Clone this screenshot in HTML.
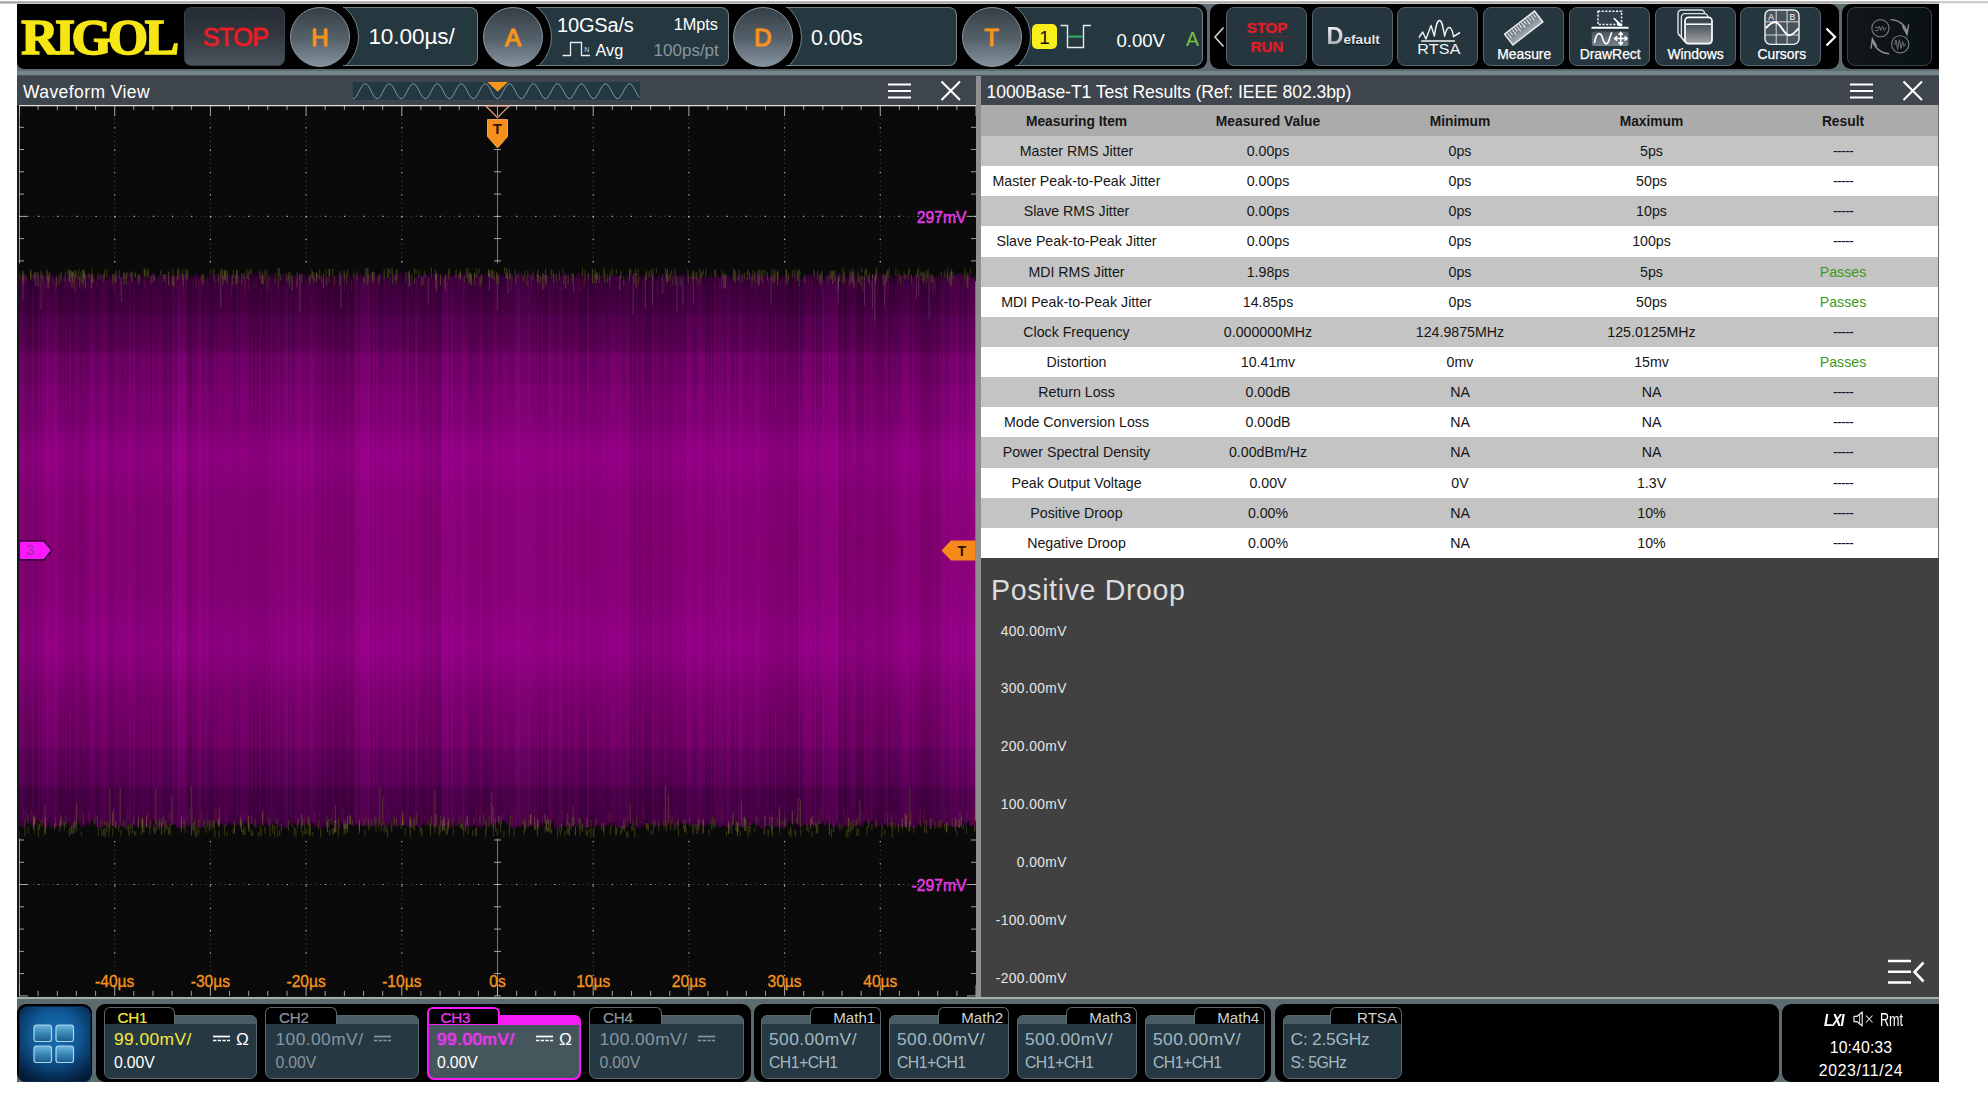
<!DOCTYPE html>
<html lang="en"><head><meta charset="utf-8"><title>RIGOL 1000Base-T1 Test Results</title>
<style>
*{box-sizing:border-box;margin:0;padding:0}
html,body{width:1988px;height:1114px;background:#fff;overflow:hidden}
body{font-family:"Liberation Sans",sans-serif;position:relative}
#topline{position:absolute;left:0;top:1px;width:1988px;height:3px;background:linear-gradient(#c2c2c2,#a8a8a8 55%,#d8d8d8)}
#topline2{position:absolute;left:1939px;top:1px;width:49px;height:3px;background:linear-gradient(#c4c4c4,#d8d8d8 70%,#fff)}
#screen{position:absolute;left:17px;top:4px;width:1921.6px;height:1078px;background:#5b6b6f;overflow:hidden}
.abs{position:absolute}
.t{position:absolute;white-space:nowrap;line-height:1}
#logo{font-family:"Liberation Serif",serif;font-weight:bold;font-size:51.5px;color:#f6e615;letter-spacing:-3.5px;-webkit-text-stroke:1.7px #f6e615;transform-origin:0 0;transform:scaleX(1.0)}
.knob{width:60px;height:60px;border-radius:50%;background:linear-gradient(#353e46,#56626b 55%,#8593a0);border:1px solid #8b97a0;text-align:center}
.knob span{display:block;font-size:24px;line-height:59px;color:#f7941d;-webkit-text-stroke:1px #f7941d;text-shadow:0 0 3px rgba(247,148,29,.4)}
#res{width:958px;border-collapse:collapse;table-layout:fixed;font-size:14.2px;color:#161616}
#res th,#res td{text-align:center;padding:0;height:30.15px;line-height:30px;white-space:nowrap;overflow:hidden}
#res th{background:#ababab;height:30.6px;padding-top:1.4px;line-height:29px;font-weight:bold;font-size:13.8px;color:#161616}
#res tbody tr:nth-child(odd) td{background:#c4c4c4}
#res tbody tr:nth-child(even) td{background:#fff}
#res td.ok{color:#3c9a1c}
#res td.na{letter-spacing:-0.7px}
#res th:nth-child(1),#res td:nth-child(1){width:191px}
#res th:nth-child(2),#res td:nth-child(2){width:192px}
#res th:nth-child(3),#res td:nth-child(3){width:192px}
#res th:nth-child(4),#res td:nth-child(4){width:191px}

</style></head>
<body>
<div id="topline"></div><div id="topline2"></div>
<div id="screen">
<!-- ===== top tool bar ===== -->
<div class="abs" style="left:0;top:0;width:1922px;height:64.8px;overflow:hidden">
<div class="abs " style="left:0px;top:0px;width:1190px;height:64.8px;background:#000;border-radius:0 9px 9px 7px"></div>
<div class="abs " style="left:1193px;top:0px;width:629px;height:64.8px;background:#000;border-radius:9px"></div>
<div class="abs " style="left:1825px;top:0px;width:97px;height:64.8px;background:#000;border-radius:9px 0 0 9px"></div>
<div class="t" id="logo" style="left:4.3px;top:6.9px">RIGOL</div>
<div class="abs " style="left:167px;top:3px;width:101px;height:58.8px;background:linear-gradient(#262c33,#30373f 45%,#4b545c);border-radius:7px;border:1px solid #3a4047"></div>
<div class="t " style="left:218.5px;transform:translateX(-50%);top:21.47px;font-size:25.2px;color:#ee1c25;-webkit-text-stroke:0.5px #ee1c25;letter-spacing:-0.6px;text-shadow:0 0 3px rgba(238,28,37,.45)">STOP</div>
<div class="abs" style="left:326px;top:3px;width:135px;height:59px;background:#25373f;border:1px solid #74828a;border-radius:0 8px 8px 0;border-left:none;overflow:hidden"><div class="abs" style="left:-62px;top:-10.5px;width:78px;height:78px;border-radius:50%;background:#000;border:1px solid #74828a"></div></div>
<div class="abs knob" style="left:273px;top:2.7px"><span>H</span></div>
<div class="abs" style="left:519px;top:3px;width:193px;height:59px;background:#25373f;border:1px solid #74828a;border-radius:0 8px 8px 0;border-left:none;overflow:hidden"><div class="abs" style="left:-62px;top:-10.5px;width:78px;height:78px;border-radius:50%;background:#000;border:1px solid #74828a"></div></div>
<div class="abs knob" style="left:466px;top:2.7px"><span>A</span></div>
<div class="abs" style="left:769px;top:3px;width:171px;height:59px;background:#25373f;border:1px solid #74828a;border-radius:0 8px 8px 0;border-left:none;overflow:hidden"><div class="abs" style="left:-62px;top:-10.5px;width:78px;height:78px;border-radius:50%;background:#000;border:1px solid #74828a"></div></div>
<div class="abs knob" style="left:716px;top:2.7px"><span>D</span></div>
<div class="abs" style="left:997.5px;top:3px;width:188.5px;height:59px;background:#25373f;border:1px solid #74828a;border-radius:0 8px 8px 0;border-left:none;overflow:hidden"><div class="abs" style="left:-62px;top:-10.5px;width:78px;height:78px;border-radius:50%;background:#000;border:1px solid #74828a"></div></div>
<div class="abs knob" style="left:944.5px;top:2.7px"><span>T</span></div>
<div class="t " style="left:351.4px;top:22.47px;font-size:22.6px;color:#fff;letter-spacing:-0.1px">10.00µs/</div>
<div class="t " style="left:540px;top:11.47px;font-size:20px;color:#fff;letter-spacing:-0.17px">10GSa/s</div>
<div class="t " style="right:1221px;top:12px;font-size:16.3px;color:#fff;">1Mpts</div>
<div class="t " style="left:578.5px;top:37.7px;font-size:16.3px;color:#fff;">Avg</div>
<div class="t " style="right:1220.2px;top:38.01px;font-size:17px;color:#8796a0;">100ps/pt</div>
<svg class="abs" style="left:544.5px;top:36.5px" width="30" height="17" viewBox="0 0 30 17"><path d="M0.5 14.5H8.5V1.5H19.5V14.5H28" fill="none" stroke="#e8ecee" stroke-width="1.3"/><text x="22.2" y="10.6" font-family="Liberation Sans, sans-serif" font-size="7" fill="#cfd6da">N</text></svg>
<div class="t " style="left:794px;top:22.95px;font-size:21.2px;color:#fff;">0.00s</div>
<div class="abs " style="left:1015px;top:20px;width:25px;height:25px;background:#f7ee1c;border-radius:5px"></div>
<div class="t " style="left:1027.5px;transform:translateX(-50%);top:23.52px;font-size:19px;color:#111;">1</div>
<svg class="abs" style="left:1042.6px;top:20px" width="32" height="26" viewBox="0 0 32 26"><path d="M0.5 1.5H7.5V23.5H23.5V1.5H31" fill="none" stroke="#e8ecee" stroke-width="1.4"/><path d="M8.5 12.6H22.5" stroke="#2fa56a" stroke-width="2.3"/></svg>
<div class="t " style="left:1099.4px;top:28.16px;font-size:18.6px;color:#fff;">0.00V</div>
<div class="t " style="left:1169px;top:25.79px;font-size:19.5px;color:#7ac143;">A</div>
<svg class="abs" style="left:1195.5px;top:22px" width="12" height="22" viewBox="0 0 12 22"><path d="M10.5 1.5L2 11L10.5 20.5" fill="none" stroke="#cfd4d8" stroke-width="1.6"/></svg>
<svg class="abs" style="left:1808.2px;top:21.6px" width="12" height="22" viewBox="0 0 12 22"><path d="M1.5 2.5L10 11L1.5 19.5" fill="none" stroke="#fff" stroke-width="2.3"/></svg>
<div class="abs " style="left:1209px;top:3.2px;width:81px;height:58.4px;background:#25363f;border:1px solid #566570;border-radius:8px"></div>
<div class="abs " style="left:1294.7px;top:3.2px;width:81px;height:58.4px;background:#25363f;border:1px solid #566570;border-radius:8px"></div>
<div class="abs " style="left:1380.4px;top:3.2px;width:81px;height:58.4px;background:#25363f;border:1px solid #566570;border-radius:8px"></div>
<div class="abs " style="left:1466.1px;top:3.2px;width:81px;height:58.4px;background:#25363f;border:1px solid #566570;border-radius:8px"></div>
<div class="abs " style="left:1551.8px;top:3.2px;width:81px;height:58.4px;background:#25363f;border:1px solid #566570;border-radius:8px"></div>
<div class="abs " style="left:1637.5px;top:3.2px;width:81px;height:58.4px;background:#25363f;border:1px solid #566570;border-radius:8px"></div>
<div class="abs " style="left:1723.2px;top:3.2px;width:81px;height:58.4px;background:#25363f;border:1px solid #566570;border-radius:8px"></div>
<div class="abs " style="left:1829.5px;top:3px;width:85.5px;height:58.6px;background:linear-gradient(90deg,#10161a,#0d1418 70%,#0a1116);border:1px solid #3a444b;border-radius:8px"></div>
<div class="t " style="left:1250px;transform:translateX(-50%);top:15.95px;font-size:15.3px;color:#de1e28;font-weight:bold;letter-spacing:-0.2px;text-shadow:0 0 2px rgba(232,32,42,.5)">STOP</div>
<div class="t " style="left:1250px;transform:translateX(-50%);top:35.05px;font-size:15.3px;color:#de1e28;font-weight:bold;letter-spacing:-0.2px;text-shadow:0 0 2px rgba(232,32,42,.5)">RUN</div>
<div class="abs " style="left:1226px;top:31.8px;width:48px;height:0.8px;background:#5a2a30"></div>
<div class="t" style="left:1309.5px;top:21.3px;color:#e4e7ea;font-weight:bold;font-size:13.6px;text-shadow:0 1px 1px #000"><span style="font-size:23.5px;background:linear-gradient(#fff,#9aa2a8);-webkit-background-clip:text;background-clip:text;color:transparent;text-shadow:none">D</span>efault</div>
<svg class="abs" style="left:1400.5px;top:15.4px" width="43" height="26" viewBox="0 0 46 26" preserveAspectRatio="none"><path d="M1 18.5L5 13L8.5 20L14 6.5L17.5 17C19 8 20 1.5 23 1.5S27 10 28.5 17C30 11 31.5 8.5 33.5 8.5S37 12 38 17.5L41.5 15.5L45 13.5" fill="none" stroke="#f2f4f5" stroke-width="1.5" stroke-linejoin="round"/><path d="M3.5 22H39.5" stroke="#f2f4f5" stroke-width="1.4"/></svg>
<div class="t " style="left:1421.6px;transform:translateX(-50%);top:37.98px;font-size:14.2px;color:#f2f4f5;transform:translateX(-50%) scaleX(1.13);letter-spacing:0.2px">RTSA</div>
<div class="t " style="left:1507.2px;transform:translateX(-50%);top:43.93px;font-size:13.9px;color:#fff;-webkit-text-stroke:0.25px #fff;letter-spacing:0px">Measure</div>
<div class="t " style="left:1593.2px;transform:translateX(-50%);top:43.93px;font-size:13.9px;color:#fff;-webkit-text-stroke:0.25px #fff;letter-spacing:0px">DrawRect</div>
<div class="t " style="left:1678.6px;transform:translateX(-50%);top:43.93px;font-size:13.9px;color:#fff;-webkit-text-stroke:0.25px #fff;letter-spacing:0px">Windows</div>
<div class="t " style="left:1764.8px;transform:translateX(-50%);top:43.93px;font-size:13.9px;color:#fff;-webkit-text-stroke:0.25px #fff;letter-spacing:0px">Cursors</div>
<svg class="abs" style="left:1485px;top:4px" width="46" height="42" viewBox="0 0 46 42"><defs><linearGradient id="rg" x1="0" y1="0" x2="0" y2="1"><stop offset="0" stop-color="#59636b"/><stop offset="1" stop-color="#aab2b8"/></linearGradient></defs><g transform="translate(2.6,26.2) rotate(-37.7)"><rect x="0" y="0" width="37.8" height="13.6" fill="url(#rg)" stroke="#e9edf0" stroke-width="1.5"/><g stroke="#f2f4f6" stroke-width="1"><path d="M3.0 0.8V7.5"/><path d="M5.9 0.8V5.5"/><path d="M8.8 0.8V7.5"/><path d="M11.7 0.8V5.5"/><path d="M14.6 0.8V7.5"/><path d="M17.5 0.8V5.5"/><path d="M20.4 0.8V7.5"/><path d="M23.3 0.8V5.5"/><path d="M26.2 0.8V7.5"/><path d="M29.1 0.8V5.5"/><path d="M32.0 0.8V7.5"/><path d="M34.9 0.8V5.5"/></g></g></svg>
<svg class="abs" style="left:1573.6px;top:5.6px" width="40" height="38" viewBox="0 0 40 38"><defs><linearGradient id="dg" x1="0" y1="0" x2="0" y2="1"><stop offset="0" stop-color="#4a555e"/><stop offset="1" stop-color="#77818a"/></linearGradient></defs><rect x="7" y="1.2" width="23.6" height="13.4" fill="#30404a" stroke="#eef1f3" stroke-width="1.5" stroke-dasharray="2.2 1.4"/><path d="M23.2 8.6L30.4 15.4L27.6 15.2L26.2 11.8Z M25 10.4L30.6 15.8" fill="#fff" stroke="#fff" stroke-width="1.5" stroke-linejoin="round"/><path d="M0.5 17.8H37.5" stroke="#fff" stroke-width="2"/><rect x="0.8" y="21.4" width="36.8" height="14.6" rx="2.5" fill="url(#dg)"/><path d="M3.5 32.5C5.5 21.5 9.5 21.5 11.5 28S16.5 36.5 18.5 28.5L20.5 23" fill="none" stroke="#fff" stroke-width="1.7" stroke-linecap="round"/><path d="M29.8 22.6V34.4M23.8 28.5H35.8M27.6 24.8L29.8 22.4L32 24.8M27.6 32.2L29.8 34.6L32 32.2M26 26.3L23.6 28.5L26 30.7M33.6 26.3L36 28.5L33.6 30.7" fill="none" stroke="#fff" stroke-width="1.5"/></svg>
<svg class="abs" style="left:1660.2px;top:5.4px" width="38" height="38" viewBox="0 0 38 38"><defs><linearGradient id="wg2" x1="0" y1="0" x2="0" y2="1"><stop offset="0" stop-color="#2f3a43"/><stop offset="0.3" stop-color="#4a545c"/><stop offset="1" stop-color="#a3a5a6"/></linearGradient></defs><rect x="1" y="1" width="26.5" height="26" rx="3.5" fill="#27363f" stroke="#dfe4e8" stroke-width="1.4"/><rect x="4.4" y="4.6" width="26.5" height="26" rx="3.5" fill="#27363f" stroke="#dfe4e8" stroke-width="1.4"/><path d="M1.6 25L8 33" stroke="#dfe4e8" stroke-width="1.3"/><rect x="8" y="8.4" width="27" height="26.2" rx="3.5" fill="url(#wg2)" stroke="#fff" stroke-width="1.7"/><path d="M8.4 15.2H34.8" stroke="#fff" stroke-width="1.5"/></svg>
<svg class="abs" style="left:1746.6px;top:5.3px" width="37" height="37" viewBox="0 0 37 37"><rect x="1" y="1" width="34" height="34.4" rx="5.5" fill="#48535d" stroke="#eef1f3" stroke-width="1.4"/><path d="M12.2 1.5V35M23.1 1.5V35M1.5 12.8H34.5M1.5 26H34.5" stroke="#e6eaed" stroke-width="1" opacity="0.9"/><path d="M2 19C5.5 15 9 12.6 12.2 13.4C17 15 20 25.5 25 26.2C28.5 26.3 31.5 23 34.3 19.5" fill="none" stroke="#fff" stroke-width="2"/><text x="4.2" y="10.6" font-family="Liberation Sans, sans-serif" font-size="8.6" fill="#fff">A</text><text x="25.6" y="10.6" font-family="Liberation Sans, sans-serif" font-size="8.6" fill="#fff">B</text></svg>
<svg class="abs" style="left:1853px;top:14px" width="44" height="40" viewBox="0 0 44 40" fill="none" stroke="#777b80" stroke-width="1.1"><circle cx="10.4" cy="10.2" r="8.6"/><circle cx="30.2" cy="26.3" r="8.6"/><path d="M20.4 1.6C29 1.8 35.5 7 37.2 15M32.4 8L37 16.6L38.6 6.4" stroke-width="1.4" stroke="#8d9196"/><path d="M19.2 35.8C10.5 35 4 29.5 2.2 21.5M6.8 28.5L2.4 20.6L1 30.6" stroke-width="1.4" stroke="#8d9196"/><path d="M4.6 12.6H8L9.4 8.2L11 12.4L12.6 8.4L14.4 12.4L16 9.4M5 9.4H8" stroke-width="0.9"/><path d="M24.6 27L26 22L27.6 31.4L29.4 21.6L31 30.4L32.6 23.4L34 28.4L35.4 25.6" stroke-width="0.9"/></svg>
</div>
<div class="abs " style="left:0px;top:67px;width:1922px;height:4px;background:#76858a"></div>
<div class="abs " style="left:0px;top:71px;width:1922px;height:1.3px;background:#4b5459"></div>
<!-- ===== waveform view ===== -->
<div class="abs " style="left:0px;top:72.3px;width:959px;height:29.1px;background:#3f454c"></div>
<div class="abs " style="left:959px;top:72.3px;width:5px;height:923.7px;background:#8f9092"></div>
<div class="t " style="left:6px;top:79.99px;font-size:17.5px;color:#fff;letter-spacing:0.42px">Waveform View</div>
<svg class="abs" style="left:336px;top:78px" width="287" height="18" viewBox="0 0 287 18"><rect width="287" height="18" fill="#243842"/><polyline points="0.0,16.7 1.5,16.3 3.0,14.8 4.5,12.4 6.0,9.6 7.5,6.7 9.0,4.2 10.5,2.4 12.0,1.7 13.5,2.1 15.0,3.6 16.5,6.0 18.0,8.8 19.5,11.7 21.0,14.2 22.5,16.0 24.0,16.7 25.5,16.3 27.0,14.8 28.5,12.5 30.0,9.6 31.5,6.7 33.0,4.2 34.5,2.5 36.0,1.7 37.5,2.1 39.0,3.6 40.5,5.9 42.0,8.7 43.5,11.6 45.0,14.2 46.5,15.9 48.0,16.7 49.5,16.3 51.0,14.8 52.5,12.5 54.0,9.7 55.5,6.8 57.0,4.3 58.5,2.5 60.0,1.7 61.5,2.1 63.0,3.5 64.5,5.9 66.0,8.7 67.5,11.6 69.0,14.1 70.5,15.9 72.0,16.7 73.5,16.3 75.0,14.9 76.5,12.6 78.0,9.8 79.5,6.9 81.0,4.3 82.5,2.5 84.0,1.7 85.5,2.1 87.0,3.5 88.5,5.8 90.0,8.6 91.5,11.5 93.0,14.1 94.5,15.9 96.0,16.7 97.5,16.3 99.0,14.9 100.5,12.6 102.0,9.8 103.5,6.9 105.0,4.4 106.5,2.5 108.0,1.7 109.5,2.1 111.0,3.5 112.5,5.8 114.0,8.6 115.5,11.5 117.0,14.0 118.5,15.9 120.0,16.7 121.5,16.4 123.0,15.0 124.5,12.7 126.0,9.9 127.5,7.0 129.0,4.4 130.5,2.6 132.0,1.7 133.5,2.0 135.0,3.4 136.5,5.7 138.0,8.5 139.5,11.4 141.0,14.0 142.5,15.8 144.0,16.7 145.5,16.4 147.0,15.0 148.5,12.7 150.0,9.9 151.5,7.0 153.0,4.4 154.5,2.6 156.0,1.7 157.5,2.0 159.0,3.4 160.5,5.6 162.0,8.4 163.5,11.4 165.0,13.9 166.5,15.8 168.0,16.7 169.5,16.4 171.0,15.0 172.5,12.8 174.0,10.0 175.5,7.1 177.0,4.5 178.5,2.6 180.0,1.7 181.5,2.0 183.0,3.4 184.5,5.6 186.0,8.4 187.5,11.3 189.0,13.9 190.5,15.8 192.0,16.7 193.5,16.4 195.0,15.1 196.5,12.8 198.0,10.0 199.5,7.1 201.0,4.5 202.5,2.6 204.0,1.7 205.5,2.0 207.0,3.3 208.5,5.5 210.0,8.3 211.5,11.2 213.0,13.8 214.5,15.7 216.0,16.6 217.5,16.4 219.0,15.1 220.5,12.9 222.0,10.1 223.5,7.2 225.0,4.6 226.5,2.7 228.0,1.8 229.5,2.0 231.0,3.3 232.5,5.5 234.0,8.3 235.5,11.2 237.0,13.8 238.5,15.7 240.0,16.6 241.5,16.4 243.0,15.1 244.5,12.9 246.0,10.2 247.5,7.2 249.0,4.6 250.5,2.7 252.0,1.8 253.5,2.0 255.0,3.2 256.5,5.4 258.0,8.2 259.5,11.1 261.0,13.7 262.5,15.7 264.0,16.6 265.5,16.5 267.0,15.2 268.5,13.0 270.0,10.2 271.5,7.3 273.0,4.7 274.5,2.7 276.0,1.8 277.5,1.9 279.0,3.2 280.5,5.4 282.0,8.1 283.5,11.1 285.0,13.7 286.5,15.7" fill="none" stroke="#86a5ad" stroke-width="0.9"/><path d="M134.4 0H155L144.7 9.8Z" fill="#f7941d"/></svg>
<svg class="abs" style="left:871px;top:79.2px" width="24" height="16" viewBox="0 0 24 16"><path d="M0 1.5H23M0 8H23M0 14.5H23" stroke="#fff" stroke-width="2.2"/></svg>
<svg class="abs" style="left:922.5px;top:76.3px" width="22" height="22" viewBox="0 0 22 22"><path d="M1.5 1.5L20 20M20 1.5L1.5 20" stroke="#fff" stroke-width="2.1"/></svg>
<svg class="abs" style="left:1px;top:101.4px" width="958" height="891.9" viewBox="0 0 958 891.9">
<defs><linearGradient id="wg" x1="0" y1="0" x2="0" y2="1"><stop offset="0.000" stop-color="#2c0030"/><stop offset="0.029" stop-color="#3e003e"/><stop offset="0.050" stop-color="#440041"/><stop offset="0.073" stop-color="#4a0046"/><stop offset="0.082" stop-color="#530050"/><stop offset="0.118" stop-color="#5b0055"/><stop offset="0.140" stop-color="#62005a"/><stop offset="0.150" stop-color="#74006a"/><stop offset="0.199" stop-color="#78006e"/><stop offset="0.208" stop-color="#800074"/><stop offset="0.270" stop-color="#840078"/><stop offset="0.299" stop-color="#900082"/><stop offset="0.327" stop-color="#960087"/><stop offset="0.365" stop-color="#930084"/><stop offset="0.399" stop-color="#8c007c"/><stop offset="0.497" stop-color="#8a0078"/><stop offset="0.587" stop-color="#8c007c"/><stop offset="0.631" stop-color="#920084"/><stop offset="0.676" stop-color="#950087"/><stop offset="0.708" stop-color="#8e0080"/><stop offset="0.748" stop-color="#820075"/><stop offset="0.801" stop-color="#7a006e"/><stop offset="0.848" stop-color="#76006a"/><stop offset="0.859" stop-color="#680062"/><stop offset="0.916" stop-color="#5e005a"/><stop offset="0.927" stop-color="#4e004c"/><stop offset="0.977" stop-color="#480048"/><stop offset="1.000" stop-color="#400040"/></linearGradient></defs>
<rect width="958" height="891.9" fill="#0a0a0a"/>
<path d="M96.7 0V890.9M192.4 0V890.9M288.1 0V890.9M383.8 0V890.9M575.2 0V890.9M670.9 0V890.9M766.6 0V890.9M862.3 0V890.9" stroke="#8c8c8c" stroke-width="1" stroke-dasharray="1 3.46" opacity="0.55" fill="none"/>
<path d="M96.7 0V890.9M192.4 0V890.9M288.1 0V890.9M383.8 0V890.9M575.2 0V890.9M670.9 0V890.9M766.6 0V890.9M862.3 0V890.9" stroke="#fff" stroke-width="1.2" stroke-dasharray="1.3 21" opacity="0.6" fill="none"/>
<path d="M1 111.4H958M1 222.7H958M1 334.1H958M1 556.8H958M1 668.2H958M1 779.5H958" stroke="#8c8c8c" stroke-width="1" stroke-dasharray="1 3.78" opacity="0.55" fill="none"/>
<path d="M1 111.4H958M1 222.7H958M1 334.1H958M1 556.8H958M1 668.2H958M1 779.5H958" stroke="#fff" stroke-width="1.2" stroke-dasharray="1.3 17.82" opacity="0.6" fill="none"/>
<path d="M1.0 0v11M1.0 890.9v-11M20.1 0v5M20.1 890.9v-5M39.3 0v5M39.3 890.9v-5M58.4 0v5M58.4 890.9v-5M77.6 0v5M77.6 890.9v-5M96.7 0v11M96.7 890.9v-11M115.8 0v5M115.8 890.9v-5M135.0 0v5M135.0 890.9v-5M154.1 0v5M154.1 890.9v-5M173.3 0v5M173.3 890.9v-5M192.4 0v11M192.4 890.9v-11M211.5 0v5M211.5 890.9v-5M230.7 0v5M230.7 890.9v-5M249.8 0v5M249.8 890.9v-5M269.0 0v5M269.0 890.9v-5M288.1 0v11M288.1 890.9v-11M307.2 0v5M307.2 890.9v-5M326.4 0v5M326.4 890.9v-5M345.5 0v5M345.5 890.9v-5M364.7 0v5M364.7 890.9v-5M383.8 0v11M383.8 890.9v-11M402.9 0v5M402.9 890.9v-5M422.1 0v5M422.1 890.9v-5M441.2 0v5M441.2 890.9v-5M460.4 0v5M460.4 890.9v-5M479.5 0v11M479.5 890.9v-11M498.6 0v5M498.6 890.9v-5M517.8 0v5M517.8 890.9v-5M536.9 0v5M536.9 890.9v-5M556.1 0v5M556.1 890.9v-5M575.2 0v11M575.2 890.9v-11M594.3 0v5M594.3 890.9v-5M613.5 0v5M613.5 890.9v-5M632.6 0v5M632.6 890.9v-5M651.8 0v5M651.8 890.9v-5M670.9 0v11M670.9 890.9v-11M690.0 0v5M690.0 890.9v-5M709.2 0v5M709.2 890.9v-5M728.3 0v5M728.3 890.9v-5M747.5 0v5M747.5 890.9v-5M766.6 0v11M766.6 890.9v-11M785.7 0v5M785.7 890.9v-5M804.9 0v5M804.9 890.9v-5M824.0 0v5M824.0 890.9v-5M843.2 0v5M843.2 890.9v-5M862.3 0v11M862.3 890.9v-11M881.4 0v5M881.4 890.9v-5M900.6 0v5M900.6 890.9v-5M919.7 0v5M919.7 890.9v-5M938.9 0v5M938.9 890.9v-5M958.0 0v11M958.0 890.9v-11M1 0.0h9M958 0.0h-9M476.0 0.0h7M1 22.3h5M958 22.3h-5M476.0 22.3h7M1 44.5h5M958 44.5h-5M476.0 44.5h7M1 66.8h5M958 66.8h-5M476.0 66.8h7M1 89.1h5M958 89.1h-5M476.0 89.1h7M1 111.4h9M958 111.4h-9M476.0 111.4h7M1 133.6h5M958 133.6h-5M476.0 133.6h7M1 155.9h5M958 155.9h-5M476.0 155.9h7M1 178.2h5M958 178.2h-5M476.0 178.2h7M1 200.5h5M958 200.5h-5M476.0 200.5h7M1 222.7h9M958 222.7h-9M476.0 222.7h7M1 245.0h5M958 245.0h-5M476.0 245.0h7M1 267.3h5M958 267.3h-5M476.0 267.3h7M1 289.5h5M958 289.5h-5M476.0 289.5h7M1 311.8h5M958 311.8h-5M476.0 311.8h7M1 334.1h9M958 334.1h-9M476.0 334.1h7M1 356.4h5M958 356.4h-5M476.0 356.4h7M1 378.6h5M958 378.6h-5M476.0 378.6h7M1 400.9h5M958 400.9h-5M476.0 400.9h7M1 423.2h5M958 423.2h-5M476.0 423.2h7M1 445.4h9M958 445.4h-9M476.0 445.4h7M1 467.7h5M958 467.7h-5M476.0 467.7h7M1 490.0h5M958 490.0h-5M476.0 490.0h7M1 512.3h5M958 512.3h-5M476.0 512.3h7M1 534.5h5M958 534.5h-5M476.0 534.5h7M1 556.8h9M958 556.8h-9M476.0 556.8h7M1 579.1h5M958 579.1h-5M476.0 579.1h7M1 601.4h5M958 601.4h-5M476.0 601.4h7M1 623.6h5M958 623.6h-5M476.0 623.6h7M1 645.9h5M958 645.9h-5M476.0 645.9h7M1 668.2h9M958 668.2h-9M476.0 668.2h7M1 690.4h5M958 690.4h-5M476.0 690.4h7M1 712.7h5M958 712.7h-5M476.0 712.7h7M1 735.0h5M958 735.0h-5M476.0 735.0h7M1 757.3h5M958 757.3h-5M476.0 757.3h7M1 779.5h9M958 779.5h-9M476.0 779.5h7M1 801.8h5M958 801.8h-5M476.0 801.8h7M1 824.1h5M958 824.1h-5M476.0 824.1h7M1 846.4h5M958 846.4h-5M476.0 846.4h7M1 868.6h5M958 868.6h-5M476.0 868.6h7M1 890.9h9M958 890.9h-9M476.0 890.9h7" stroke="#dcdcdc" stroke-width="1" fill="none" opacity="0.72"/>
<path d="M1 890.9V0.5H958" stroke="#e0e0e0" stroke-width="1.3" fill="none"/>
<path d="M479.5 44V172.6" stroke="#cfcfcf" stroke-width="1" opacity="0.55" fill="none"/>
<path d="M479.5 719.6V890.9" stroke="#cfcfcf" stroke-width="1" opacity="0.55" fill="none"/>
<rect x="1" y="166.6" width="957" height="559" fill="url(#wg)"/>
<linearGradient id="sg1" gradientUnits="userSpaceOnUse" x1="0" y1="166.6" x2="0" y2="725.6"><stop offset="0" stop-color="#000" stop-opacity="1"/><stop offset="0.18" stop-color="#000" stop-opacity="0.8"/><stop offset="0.3" stop-color="#000" stop-opacity="0.4"/><stop offset="0.5" stop-color="#000" stop-opacity="0.33"/><stop offset="0.72" stop-color="#000" stop-opacity="0.4"/><stop offset="0.85" stop-color="#000" stop-opacity="0.8"/><stop offset="1" stop-color="#000" stop-opacity="1"/></linearGradient>
<g stroke="url(#sg1)" opacity="0.15" fill="none"><path d="M8.5 166.6v559M11.5 166.6v559M18.5 166.6v559M22.5 166.6v559M35.5 166.6v559M40.5 166.6v559M60.5 166.6v559M91.5 166.6v559M92.5 166.6v559M93.5 166.6v559M94.5 166.6v559M95.5 166.6v559M113.5 166.6v559M127.5 166.6v559M145.5 166.6v559M158.5 166.6v559M176.5 166.6v559M186.5 166.6v559M190.5 166.6v559M205.5 166.6v559M216.5 166.6v559M217.5 166.6v559M247.5 166.6v559M260.5 166.6v559M262.5 166.6v559M263.5 166.6v559M264.5 166.6v559M270.5 166.6v559M272.5 166.6v559M274.5 166.6v559M275.5 166.6v559M284.5 166.6v559M285.5 166.6v559M288.5 166.6v559M290.5 166.6v559M303.5 166.6v559M305.5 166.6v559M309.5 166.6v559M310.5 166.6v559M318.5 166.6v559M319.5 166.6v559M323.5 166.6v559M324.5 166.6v559M325.5 166.6v559M328.5 166.6v559M335.5 166.6v559M340.5 166.6v559M341.5 166.6v559M357.5 166.6v559M364.5 166.6v559M367.5 166.6v559M386.5 166.6v559M387.5 166.6v559M396.5 166.6v559M411.5 166.6v559M419.5 166.6v559M435.5 166.6v559M438.5 166.6v559M443.5 166.6v559M453.5 166.6v559M469.5 166.6v559M475.5 166.6v559M490.5 166.6v559M495.5 166.6v559M496.5 166.6v559M502.5 166.6v559M506.5 166.6v559M512.5 166.6v559M525.5 166.6v559M527.5 166.6v559M528.5 166.6v559M529.5 166.6v559M536.5 166.6v559M538.5 166.6v559M554.5 166.6v559M555.5 166.6v559M579.5 166.6v559M585.5 166.6v559M588.5 166.6v559M589.5 166.6v559M590.5 166.6v559M599.5 166.6v559M616.5 166.6v559M617.5 166.6v559M628.5 166.6v559M629.5 166.6v559M630.5 166.6v559M637.5 166.6v559M644.5 166.6v559M645.5 166.6v559M651.5 166.6v559M656.5 166.6v559M657.5 166.6v559M663.5 166.6v559M692.5 166.6v559M698.5 166.6v559M699.5 166.6v559M715.5 166.6v559M716.5 166.6v559M745.5 166.6v559M751.5 166.6v559M752.5 166.6v559M755.5 166.6v559M758.5 166.6v559M760.5 166.6v559M765.5 166.6v559M768.5 166.6v559M778.5 166.6v559M784.5 166.6v559M791.5 166.6v559M806.5 166.6v559M813.5 166.6v559M815.5 166.6v559M820.5 166.6v559M841.5 166.6v559M843.5 166.6v559M844.5 166.6v559M845.5 166.6v559M864.5 166.6v559M865.5 166.6v559M871.5 166.6v559M872.5 166.6v559M891.5 166.6v559M892.5 166.6v559M895.5 166.6v559M897.5 166.6v559M903.5 166.6v559M904.5 166.6v559M907.5 166.6v559M912.5 166.6v559M924.5 166.6v559M927.5 166.6v559M947.5 166.6v559" stroke-width="1"/><path d="M13 166.6v559M17 166.6v559M42 166.6v559M44 166.6v559M68 166.6v559M104 166.6v559M106 166.6v559M119 166.6v559M133 166.6v559M157 166.6v559M171 166.6v559M185 166.6v559M194 166.6v559M236 166.6v559M240 166.6v559M317 166.6v559M321 166.6v559M362 166.6v559M385 166.6v559M392 166.6v559M406 166.6v559M422 166.6v559M442 166.6v559M457 166.6v559M468 166.6v559M515 166.6v559M518 166.6v559M523 166.6v559M546 166.6v559M562 166.6v559M575 166.6v559M577 166.6v559M613 166.6v559M633 166.6v559M643 166.6v559M653 166.6v559M662 166.6v559M688 166.6v559M695 166.6v559M708 166.6v559M719 166.6v559M780 166.6v559M783 166.6v559M795 166.6v559M876 166.6v559M899 166.6v559M902 166.6v559M942 166.6v559" stroke-width="2"/><path d="M54.5 166.6v559M78.5 166.6v559M109.5 166.6v559M245.5 166.6v559M312.5 166.6v559M333.5 166.6v559M353.5 166.6v559M465.5 166.6v559M482.5 166.6v559M493.5 166.6v559M548.5 166.6v559M564.5 166.6v559M567.5 166.6v559M572.5 166.6v559M621.5 166.6v559M666.5 166.6v559M730.5 166.6v559M771.5 166.6v559M774.5 166.6v559M822.5 166.6v559M827.5 166.6v559M839.5 166.6v559M859.5 166.6v559M862.5 166.6v559M929.5 166.6v559" stroke-width="3"/></g>
<linearGradient id="sg2" gradientUnits="userSpaceOnUse" x1="0" y1="166.6" x2="0" y2="725.6"><stop offset="0" stop-color="#2a0030" stop-opacity="1"/><stop offset="0.18" stop-color="#2a0030" stop-opacity="0.8"/><stop offset="0.3" stop-color="#2a0030" stop-opacity="0.4"/><stop offset="0.5" stop-color="#2a0030" stop-opacity="0.33"/><stop offset="0.72" stop-color="#2a0030" stop-opacity="0.4"/><stop offset="0.85" stop-color="#2a0030" stop-opacity="0.8"/><stop offset="1" stop-color="#2a0030" stop-opacity="1"/></linearGradient>
<g stroke="url(#sg2)" opacity="0.2" fill="none"><path d="M6.5 166.6v559M19.5 166.6v559M23.5 166.6v559M100.5 166.6v559M129.5 166.6v559M138.5 166.6v559M150.5 166.6v559M159.5 166.6v559M163.5 166.6v559M168.5 166.6v559M169.5 166.6v559M188.5 166.6v559M191.5 166.6v559M220.5 166.6v559M231.5 166.6v559M243.5 166.6v559M252.5 166.6v559M254.5 166.6v559M258.5 166.6v559M266.5 166.6v559M271.5 166.6v559M276.5 166.6v559M287.5 166.6v559M299.5 166.6v559M300.5 166.6v559M304.5 166.6v559M326.5 166.6v559M327.5 166.6v559M348.5 166.6v559M365.5 166.6v559M373.5 166.6v559M377.5 166.6v559M379.5 166.6v559M402.5 166.6v559M412.5 166.6v559M413.5 166.6v559M416.5 166.6v559M420.5 166.6v559M439.5 166.6v559M440.5 166.6v559M454.5 166.6v559M455.5 166.6v559M461.5 166.6v559M470.5 166.6v559M504.5 166.6v559M509.5 166.6v559M526.5 166.6v559M537.5 166.6v559M559.5 166.6v559M578.5 166.6v559M610.5 166.6v559M623.5 166.6v559M626.5 166.6v559M627.5 166.6v559M631.5 166.6v559M649.5 166.6v559M675.5 166.6v559M676.5 166.6v559M689.5 166.6v559M701.5 166.6v559M702.5 166.6v559M713.5 166.6v559M714.5 166.6v559M777.5 166.6v559M800.5 166.6v559M802.5 166.6v559M803.5 166.6v559M830.5 166.6v559M842.5 166.6v559M850.5 166.6v559M855.5 166.6v559M870.5 166.6v559M879.5 166.6v559M893.5 166.6v559M906.5 166.6v559M908.5 166.6v559M911.5 166.6v559M919.5 166.6v559M920.5 166.6v559M935.5 166.6v559M945.5 166.6v559M946.5 166.6v559M948.5 166.6v559M951.5 166.6v559" stroke-width="1"/><path d="M10 166.6v559M50 166.6v559M76 166.6v559M102 166.6v559M122 166.6v559M153 166.6v559M173 166.6v559M233 166.6v559M251 166.6v559M401 166.6v559M404 166.6v559M432 166.6v559M437 166.6v559M460 166.6v559M521 166.6v559M553 166.6v559M582 166.6v559M655 166.6v559M660 166.6v559M678 166.6v559M691 166.6v559M726 166.6v559M728 166.6v559M747 166.6v559M799 166.6v559M809 166.6v559M878 166.6v559M910 166.6v559" stroke-width="2"/><path d="M32.5 166.6v559M46.5 166.6v559M63.5 166.6v559M70.5 166.6v559M81.5 166.6v559M147.5 166.6v559M256.5 166.6v559M371.5 166.6v559M394.5 166.6v559M451.5 166.6v559M472.5 166.6v559M605.5 166.6v559M705.5 166.6v559M734.5 166.6v559M743.5 166.6v559M762.5 166.6v559M881.5 166.6v559" stroke-width="3"/></g>
<linearGradient id="sg3" gradientUnits="userSpaceOnUse" x1="0" y1="166.6" x2="0" y2="725.6"><stop offset="0" stop-color="#c010b8" stop-opacity="0.35"/><stop offset="0.18" stop-color="#c010b8" stop-opacity="0.45"/><stop offset="0.3" stop-color="#c010b8" stop-opacity="0.4"/><stop offset="0.5" stop-color="#c010b8" stop-opacity="0.33"/><stop offset="0.72" stop-color="#c010b8" stop-opacity="0.4"/><stop offset="0.85" stop-color="#c010b8" stop-opacity="0.45"/><stop offset="1" stop-color="#c010b8" stop-opacity="0.35"/></linearGradient>
<g stroke="url(#sg3)" opacity="0.12" fill="none"><path d="M15.5 166.6v559M20.5 166.6v559M21.5 166.6v559M24.5 166.6v559M25.5 166.6v559M36.5 166.6v559M39.5 166.6v559M61.5 166.6v559M72.5 166.6v559M114.5 166.6v559M130.5 166.6v559M137.5 166.6v559M139.5 166.6v559M180.5 166.6v559M187.5 166.6v559M202.5 166.6v559M204.5 166.6v559M209.5 166.6v559M218.5 166.6v559M259.5 166.6v559M273.5 166.6v559M281.5 166.6v559M282.5 166.6v559M286.5 166.6v559M291.5 166.6v559M293.5 166.6v559M308.5 166.6v559M322.5 166.6v559M329.5 166.6v559M346.5 166.6v559M347.5 166.6v559M350.5 166.6v559M366.5 166.6v559M368.5 166.6v559M389.5 166.6v559M418.5 166.6v559M433.5 166.6v559M434.5 166.6v559M497.5 166.6v559M499.5 166.6v559M503.5 166.6v559M510.5 166.6v559M513.5 166.6v559M533.5 166.6v559M558.5 166.6v559M601.5 166.6v559M607.5 166.6v559M611.5 166.6v559M634.5 166.6v559M635.5 166.6v559M636.5 166.6v559M669.5 166.6v559M670.5 166.6v559M693.5 166.6v559M709.5 166.6v559M710.5 166.6v559M712.5 166.6v559M723.5 166.6v559M724.5 166.6v559M732.5 166.6v559M776.5 166.6v559M785.5 166.6v559M801.5 166.6v559M807.5 166.6v559M812.5 166.6v559M814.5 166.6v559M832.5 166.6v559M846.5 166.6v559M849.5 166.6v559M867.5 166.6v559M886.5 166.6v559M890.5 166.6v559M921.5 166.6v559M923.5 166.6v559M925.5 166.6v559M934.5 166.6v559M937.5 166.6v559M939.5 166.6v559M940.5 166.6v559M950.5 166.6v559" stroke-width="1"/><path d="M4 166.6v559M52 166.6v559M97 166.6v559M112 166.6v559M116 166.6v559M141 166.6v559M295 166.6v559M619 166.6v559M648 166.6v559M681 166.6v559M757 166.6v559M767 166.6v559M797 166.6v559M817 166.6v559M819 166.6v559M834 166.6v559M889 166.6v559M953 166.6v559" stroke-width="2"/><path d="M29.5 166.6v559M125.5 166.6v559M161.5 166.6v559M182.5 166.6v559M207.5 166.6v559M223.5 166.6v559M226.5 166.6v559M359.5 166.6v559M445.5 166.6v559M531.5 166.6v559M721.5 166.6v559M749.5 166.6v559M789.5 166.6v559M836.5 166.6v559" stroke-width="3"/></g>
<linearGradient id="sg4" gradientUnits="userSpaceOnUse" x1="0" y1="166.6" x2="0" y2="725.6"><stop offset="0" stop-color="#b0107a" stop-opacity="0.35"/><stop offset="0.18" stop-color="#b0107a" stop-opacity="0.45"/><stop offset="0.3" stop-color="#b0107a" stop-opacity="0.4"/><stop offset="0.5" stop-color="#b0107a" stop-opacity="0.33"/><stop offset="0.72" stop-color="#b0107a" stop-opacity="0.4"/><stop offset="0.85" stop-color="#b0107a" stop-opacity="0.45"/><stop offset="1" stop-color="#b0107a" stop-opacity="0.35"/></linearGradient>
<g stroke="url(#sg4)" opacity="0.17" fill="none"><path d="M74.5 166.6v559M86.5 166.6v559M128.5 166.6v559M134.5 166.6v559M136.5 166.6v559M151.5 166.6v559M174.5 166.6v559M219.5 166.6v559M221.5 166.6v559M228.5 166.6v559M234.5 166.6v559M242.5 166.6v559M253.5 166.6v559M298.5 166.6v559M349.5 166.6v559M351.5 166.6v559M356.5 166.6v559M369.5 166.6v559M410.5 166.6v559M429.5 166.6v559M516.5 166.6v559M519.5 166.6v559M524.5 166.6v559M624.5 166.6v559M717.5 166.6v559M764.5 166.6v559M781.5 166.6v559M825.5 166.6v559M866.5 166.6v559M894.5 166.6v559M896.5 166.6v559M922.5 166.6v559" stroke-width="1"/><path d="M38 166.6v559M88 166.6v559M144 166.6v559M211 166.6v559M337 166.6v559M415 166.6v559M463 166.6v559M477 166.6v559M501 166.6v559M543 166.6v559M570 166.6v559M609 166.6v559M672 166.6v559M683 166.6v559M697 166.6v559M793 166.6v559M805 166.6v559M857 166.6v559M869 166.6v559" stroke-width="2"/><path d="M58.5 166.6v559M268.5 166.6v559M398.5 166.6v559M853.5 166.6v559M955.5 166.6v559" stroke-width="3"/></g>
<g fill="#000" opacity="0.06"><rect x="1.0" y="166.6" width="26.8" height="559"/><rect x="46.1" y="166.6" width="22.2" height="559"/><rect x="87.2" y="166.6" width="12.7" height="559"/><rect x="114.3" y="166.6" width="29.6" height="559"/><rect x="143.9" y="166.6" width="10.4" height="559"/><rect x="169.5" y="166.6" width="10.5" height="559"/><rect x="191.3" y="166.6" width="26.4" height="559"/><rect x="217.7" y="166.6" width="32.9" height="559"/><rect x="295.6" y="166.6" width="18.2" height="559"/><rect x="313.8" y="166.6" width="23.9" height="559"/><rect x="404.6" y="166.6" width="19.0" height="559"/><rect x="611.9" y="166.6" width="18.7" height="559"/><rect x="630.6" y="166.6" width="23.6" height="559"/><rect x="747.1" y="166.6" width="32.0" height="559"/><rect x="820.4" y="166.6" width="33.3" height="559"/><rect x="853.6" y="166.6" width="21.2" height="559"/><rect x="902.7" y="166.6" width="20.5" height="559"/></g><g fill="#d020c8" opacity="0.05"><rect x="154.3" y="166.6" width="15.1" height="559"/><rect x="337.7" y="166.6" width="11.8" height="559"/><rect x="349.4" y="166.6" width="7.0" height="559"/><rect x="423.5" y="166.6" width="22.9" height="559"/><rect x="491.2" y="166.6" width="27.0" height="559"/><rect x="697.9" y="166.6" width="13.0" height="559"/><rect x="803.5" y="166.6" width="16.9" height="559"/><rect x="923.3" y="166.6" width="22.1" height="559"/><rect x="945.4" y="166.6" width="12.6" height="559"/></g>
<path d="M0 158.6L1 175.1L3 172.1L5 170.1L7.5 169.1L9 170.1L10 173.1L12 175.1L13 169.1L15 170.1L17.5 167.1L18.5 168.1L21 170.1L23 173.1L25 168.1L26.5 169.1L29 172.1L30.5 170.1L33 169.1L34.5 168.1L35.5 175.1L37 171.1L38.5 168.1L40.5 175.1L43 171.1L45 172.1L46.5 171.1L48.5 169.1L50.5 170.1L52.5 170.1L54 171.1L55 169.1L57 169.1L59 170.1L61.5 171.1L64 173.1L65 175.1L67 168.1L69 170.1L70 168.1L72 168.1L74 175.1L75 175.1L76 169.1L77 175.1L79 169.1L80 173.1L81.5 169.1L83 171.1L85 168.1L86.5 170.1L88 173.1L89 175.1L91 169.1L93.5 169.1L94.5 171.1L95.5 172.1L96.5 169.1L99 169.1L100.5 171.1L103 172.1L104 171.1L106.5 168.1L109 169.1L111.5 168.1L112.5 168.1L114.5 171.1L117 175.1L119 171.1L121 170.1L123.5 175.1L124.5 168.1L126.5 175.1L127.5 167.1L128.5 175.1L130.5 168.1L133 171.1L134.5 167.1L136 170.1L137.5 170.1L138.5 175.1L140.5 170.1L143 172.1L144.5 169.1L147 170.1L149.5 169.1L150.5 169.1L152.5 170.1L155 170.1L157 172.1L159 172.1L161 169.1L163.5 168.1L165.5 169.1L167.5 169.1L169 173.1L170 167.1L172.5 172.1L175 172.1L176 170.1L178 168.1L179 167.1L180.5 171.1L181.5 172.1L184 173.1L185.5 175.1L186.5 169.1L187.5 175.1L190 175.1L191.5 168.1L193 167.1L195.5 168.1L196.5 170.1L198 169.1L200 169.1L201.5 170.1L202.5 170.1L203.5 170.1L204.5 171.1L205.5 168.1L208 173.1L210.5 171.1L211.5 167.1L214 173.1L215.5 171.1L218 172.1L219 168.1L221.5 169.1L223 175.1L224 170.1L225 167.1L226 168.1L227.5 168.1L229 171.1L230 169.1L231.5 171.1L233 167.1L235 168.1L236 169.1L238.5 171.1L240.5 167.1L241.5 167.1L242.5 167.1L243.5 170.1L245.5 169.1L247 171.1L248 170.1L250 173.1L252.5 171.1L254 168.1L255 170.1L256.5 175.1L259 171.1L261.5 171.1L263.5 173.1L265.5 169.1L267.5 167.1L269.5 173.1L270.5 168.1L272.5 173.1L275 169.1L277.5 170.1L280 173.1L281.5 171.1L283.5 167.1L285.5 169.1L287.5 170.1L289 173.1L290 169.1L291.5 173.1L293 169.1L295.5 170.1L296.5 172.1L299 170.1L300.5 169.1L302.5 173.1L303.5 175.1L306 171.1L307.5 169.1L308.5 170.1L311 172.1L312 172.1L314 168.1L315.5 170.1L317.5 172.1L319.5 171.1L321 169.1L322.5 169.1L323.5 168.1L325.5 170.1L327.5 170.1L329 169.1L330 171.1L332 168.1L334 175.1L336.5 168.1L338 170.1L339 170.1L341 172.1L342 168.1L343 169.1L345.5 173.1L347 169.1L349 170.1L350 171.1L351.5 169.1L352.5 170.1L354 168.1L356.5 168.1L357.5 167.1L358.5 172.1L360.5 171.1L363 168.1L365.5 168.1L366.5 169.1L368.5 173.1L370 175.1L371 175.1L373.5 168.1L376 168.1L378 169.1L379.5 168.1L380.5 169.1L382.5 167.1L383.5 167.1L385.5 172.1L388 167.1L389 168.1L391 167.1L392.5 175.1L394.5 173.1L397 175.1L398 171.1L400 170.1L402 170.1L403 170.1L405.5 170.1L407 171.1L408.5 168.1L409.5 171.1L411 167.1L412.5 169.1L413.5 173.1L415.5 168.1L418 168.1L420.5 167.1L421.5 171.1L423.5 170.1L425 171.1L426 175.1L428 168.1L430 169.1L431 168.1L433.5 172.1L435 171.1L436.5 169.1L439 170.1L440.5 168.1L441.5 169.1L443.5 170.1L445 169.1L447.5 168.1L449.5 171.1L452 168.1L453.5 172.1L454.5 175.1L456 172.1L458.5 169.1L459.5 169.1L461 170.1L463.5 169.1L465 169.1L466 170.1L468 170.1L469.5 167.1L471.5 168.1L472.5 171.1L474.5 172.1L476 171.1L477 172.1L479 168.1L481 170.1L482 170.1L483.5 169.1L485 168.1L486.5 172.1L488 168.1L489.5 173.1L490.5 168.1L493 169.1L494.5 169.1L496 173.1L497.5 173.1L499.5 169.1L500.5 168.1L503 167.1L505 170.1L507 175.1L509.5 168.1L510.5 170.1L513 168.1L515 169.1L516.5 173.1L518.5 167.1L520 170.1L521 170.1L523.5 172.1L524.5 168.1L526.5 169.1L528.5 170.1L529.5 169.1L530.5 171.1L533 172.1L534 172.1L535.5 167.1L537 168.1L538.5 173.1L540 168.1L541 169.1L543 172.1L544 167.1L545 169.1L547 167.1L549.5 172.1L551 171.1L552 170.1L553 168.1L554 169.1L555 171.1L557.5 173.1L559.5 168.1L560.5 168.1L563 168.1L564.5 169.1L566 175.1L568.5 170.1L570 167.1L572.5 170.1L573.5 170.1L574.5 170.1L576.5 170.1L578 170.1L580.5 173.1L582.5 170.1L583.5 170.1L585 175.1L587 169.1L589.5 175.1L590.5 170.1L591.5 172.1L593 168.1L595 170.1L596.5 172.1L597.5 169.1L599 170.1L601.5 171.1L602.5 167.1L603.5 175.1L605.5 175.1L607.5 175.1L608.5 173.1L609.5 169.1L610.5 172.1L611.5 170.1L613 167.1L615 168.1L617 170.1L618.5 168.1L619.5 173.1L621.5 168.1L624 173.1L625.5 171.1L626.5 172.1L628 169.1L630.5 173.1L632.5 169.1L634 168.1L636 171.1L637.5 175.1L640 169.1L642 171.1L644 173.1L646.5 171.1L648.5 167.1L650 170.1L651.5 169.1L654 173.1L656.5 167.1L658.5 168.1L660 170.1L662 171.1L664 169.1L665.5 169.1L666.5 167.1L668 172.1L669 173.1L671 171.1L672 172.1L674.5 171.1L676.5 168.1L678 175.1L679.5 170.1L681.5 175.1L683.5 168.1L685 173.1L687 172.1L688 171.1L690 175.1L691.5 170.1L692.5 167.1L695 172.1L696 171.1L698.5 173.1L700 170.1L702 173.1L703 170.1L705.5 171.1L707.5 170.1L709.5 170.1L712 172.1L714.5 175.1L716.5 167.1L719 170.1L721.5 169.1L723 172.1L725 168.1L727.5 173.1L730 173.1L731.5 168.1L733.5 170.1L735 170.1L736.5 170.1L737.5 167.1L738.5 169.1L741 169.1L743 172.1L745.5 172.1L748 170.1L750.5 170.1L751.5 173.1L753.5 171.1L754.5 175.1L755.5 172.1L757 168.1L759.5 170.1L762 175.1L763.5 169.1L766 171.1L768.5 171.1L770.5 172.1L771.5 168.1L773.5 170.1L775.5 168.1L777.5 172.1L779 168.1L781 170.1L783.5 175.1L785 172.1L787 172.1L788.5 172.1L790 170.1L791.5 167.1L792.5 170.1L793.5 170.1L794.5 167.1L796.5 172.1L797.5 169.1L800 168.1L801 175.1L802 169.1L803.5 171.1L805.5 175.1L807 173.1L808.5 170.1L809.5 168.1L811 172.1L812 167.1L813 168.1L814.5 172.1L817 171.1L819.5 167.1L820.5 175.1L822.5 168.1L824 170.1L826 168.1L827 169.1L828 173.1L829 170.1L830.5 171.1L833 167.1L834 169.1L836.5 173.1L837.5 171.1L838.5 173.1L840 169.1L841.5 167.1L843 173.1L844.5 170.1L845.5 171.1L847.5 170.1L849.5 171.1L850.5 169.1L853 175.1L854.5 170.1L856.5 170.1L859 167.1L860.5 168.1L862 168.1L864 170.1L865.5 167.1L867.5 170.1L869.5 168.1L871.5 172.1L874 170.1L876.5 175.1L877.5 168.1L880 170.1L881.5 170.1L883 171.1L885 170.1L886.5 170.1L887.5 169.1L888.5 170.1L890 169.1L891.5 168.1L893 169.1L894.5 172.1L897 171.1L898.5 168.1L900.5 170.1L902 170.1L904.5 175.1L906 169.1L908.5 172.1L910 169.1L912.5 175.1L914 169.1L916.5 173.1L918.5 172.1L920 170.1L921.5 168.1L922.5 175.1L923.5 172.1L925.5 170.1L926.5 175.1L928 169.1L929 170.1L930 168.1L931.5 170.1L933 175.1L934 168.1L936 172.1L938 169.1L939 169.1L940 169.1L942 168.1L944.5 169.1L946.5 170.1L949 175.1L950.5 169.1L952 167.1L954 175.1L956 170.1L957 175.1L958 158.6Z" fill="#0a0a0a"/>
<path d="M0 733.6L1 721.6L3.5 720.6L4.5 722.6L6.5 722.6L8.5 717.6L10 715.6L11 720.6L12 717.6L13.5 720.6L15 721.6L16.5 720.6L17.5 718.6L19.5 715.6L21 717.6L22.5 717.6L25 718.6L27 720.6L29 723.6L30 715.6L32 723.6L33 721.6L34 723.6L36 721.6L38 722.6L40.5 720.6L42 721.6L43 720.6L45.5 719.6L47.5 718.6L50 718.6L51 715.6L52.5 720.6L54 719.6L55.5 723.6L57.5 722.6L59 715.6L60.5 718.6L62.5 721.6L63.5 722.6L65.5 720.6L68 722.6L69.5 715.6L71.5 722.6L73 715.6L75.5 715.6L78 721.6L79.5 723.6L82 722.6L84 721.6L85.5 722.6L87 720.6L88 718.6L90.5 722.6L92 717.6L94.5 720.6L96 722.6L98 723.6L100 719.6L101.5 723.6L102.5 721.6L104.5 721.6L105.5 721.6L108 722.6L109.5 720.6L112 719.6L114 721.6L115.5 718.6L116.5 723.6L117.5 719.6L120 722.6L122 717.6L124 722.6L126.5 720.6L129 721.6L131 723.6L133 722.6L135 715.6L137 715.6L138.5 722.6L140 723.6L141 720.6L142.5 721.6L144.5 722.6L146 722.6L148 717.6L150 720.6L151.5 715.6L153.5 720.6L155 720.6L156.5 718.6L158.5 721.6L160 723.6L161 722.6L163.5 723.6L165 719.6L167.5 719.6L169 721.6L170 722.6L171.5 722.6L173 719.6L175.5 722.6L176.5 719.6L179 721.6L180.5 720.6L181.5 723.6L184 722.6L186 722.6L187 718.6L189.5 720.6L190.5 719.6L191.5 715.6L193 722.6L195.5 721.6L196.5 719.6L198.5 717.6L200 719.6L201 718.6L203 718.6L205.5 720.6L207 720.6L208 723.6L210 717.6L212 717.6L214.5 720.6L217 715.6L218.5 721.6L220.5 718.6L221.5 721.6L223 715.6L225.5 722.6L227 715.6L229 718.6L231.5 720.6L233 717.6L235.5 720.6L237.5 722.6L239 722.6L240.5 718.6L241.5 721.6L243.5 715.6L244.5 721.6L246.5 719.6L248 718.6L250.5 721.6L251.5 718.6L252.5 720.6L253.5 719.6L255 718.6L256 715.6L257 719.6L259.5 718.6L261 721.6L263.5 722.6L265 720.6L266 720.6L267.5 723.6L269.5 723.6L270.5 717.6L272 719.6L274 722.6L275.5 720.6L276.5 717.6L278 717.6L279 720.6L280.5 720.6L282.5 715.6L283.5 721.6L284.5 721.6L286.5 718.6L288.5 719.6L289.5 717.6L291.5 722.6L293.5 718.6L295.5 717.6L296.5 723.6L298 721.6L300 721.6L302.5 723.6L305 722.6L306 719.6L307 722.6L309 722.6L310.5 718.6L312.5 715.6L315 722.6L317 718.6L319 719.6L320 723.6L322 722.6L324.5 718.6L327 723.6L328 722.6L329.5 717.6L332 719.6L333.5 719.6L336 721.6L337 720.6L339 718.6L340.5 721.6L342 717.6L343 721.6L344.5 720.6L347 720.6L349.5 720.6L351.5 720.6L352.5 720.6L355 720.6L356.5 723.6L358 719.6L359 715.6L360.5 715.6L362 721.6L364.5 721.6L365.5 718.6L367.5 720.6L369 723.6L370 721.6L372.5 715.6L373.5 720.6L375.5 721.6L377 715.6L378 721.6L380 720.6L381.5 720.6L384 720.6L385 720.6L387 719.6L389 721.6L390.5 720.6L392 722.6L393.5 723.6L396 720.6L398.5 720.6L400.5 722.6L401.5 722.6L403.5 721.6L405.5 717.6L407.5 722.6L409 717.6L410 717.6L411.5 721.6L413.5 719.6L415.5 720.6L416.5 719.6L418.5 722.6L420.5 721.6L421.5 722.6L423.5 721.6L424.5 721.6L425.5 720.6L428 721.6L430 718.6L431 721.6L432.5 723.6L434 717.6L435 722.6L436 717.6L438 722.6L439 721.6L441 718.6L442 715.6L444 723.6L445.5 720.6L447.5 723.6L450 720.6L452 722.6L453 720.6L454 722.6L456 719.6L458.5 721.6L461 723.6L462 720.6L464 723.6L466.5 717.6L468.5 722.6L469.5 723.6L471 721.6L472.5 718.6L473.5 720.6L475.5 720.6L477.5 718.6L479 715.6L481 721.6L483 719.6L484 715.6L486 715.6L488.5 718.6L490.5 720.6L492.5 722.6L494.5 723.6L497 722.6L499 722.6L500.5 720.6L501.5 723.6L503 722.6L504 718.6L505.5 718.6L507 721.6L509 722.6L510.5 722.6L511.5 720.6L513 719.6L515.5 721.6L517.5 720.6L520 721.6L522 723.6L523 715.6L524 722.6L526.5 715.6L528.5 723.6L530 717.6L532.5 720.6L535 715.6L536.5 723.6L538.5 723.6L540.5 720.6L542 721.6L544 721.6L546 720.6L548 721.6L550.5 721.6L552 719.6L554 722.6L556 721.6L557 720.6L558 719.6L559.5 722.6L561.5 715.6L564 721.6L565 721.6L567 723.6L569.5 722.6L572 722.6L574 715.6L575 722.6L576.5 723.6L578 721.6L579.5 718.6L581.5 722.6L583 719.6L585.5 722.6L588 720.6L590.5 720.6L591.5 717.6L593 721.6L594 723.6L595.5 718.6L597 717.6L599.5 722.6L600.5 723.6L602.5 722.6L603.5 722.6L606 722.6L608.5 723.6L610 721.6L611.5 715.6L612.5 718.6L614.5 719.6L615.5 720.6L617 721.6L618 721.6L619.5 723.6L621.5 721.6L622.5 723.6L624 718.6L625 720.6L627 721.6L628 720.6L629 715.6L631.5 718.6L633.5 718.6L635.5 720.6L637.5 720.6L640 720.6L642.5 720.6L644 720.6L646.5 720.6L648 715.6L649 721.6L651 717.6L653.5 721.6L655 715.6L656 722.6L657 723.6L659.5 718.6L661.5 715.6L664 718.6L666 719.6L667 719.6L669.5 718.6L671.5 717.6L674 721.6L676.5 720.6L677.5 720.6L679.5 717.6L681.5 722.6L683 717.6L685 721.6L687.5 720.6L690 717.6L691.5 722.6L692.5 718.6L694.5 718.6L696 718.6L697.5 720.6L699 715.6L700.5 722.6L703 722.6L704 720.6L706.5 720.6L709 722.6L711.5 722.6L713.5 720.6L714.5 720.6L716.5 715.6L718.5 719.6L719.5 721.6L722 721.6L724.5 722.6L727 715.6L729.5 722.6L731 723.6L732.5 720.6L735 718.6L736.5 717.6L738.5 718.6L740.5 720.6L742.5 723.6L744 723.6L746 723.6L747.5 721.6L749.5 720.6L751.5 721.6L753.5 719.6L754.5 718.6L757 722.6L758.5 722.6L761 721.6L763 723.6L765.5 720.6L767.5 723.6L769.5 720.6L772 715.6L774 720.6L775.5 720.6L777 717.6L778.5 717.6L780.5 722.6L782 720.6L783 722.6L785.5 720.6L788 718.6L790.5 719.6L791.5 722.6L794 719.6L796.5 720.6L799 722.6L800 719.6L802.5 719.6L804 718.6L805 715.6L806.5 721.6L809 718.6L810 715.6L812 718.6L814 720.6L816.5 722.6L817.5 721.6L818.5 717.6L819.5 722.6L822 722.6L823.5 717.6L826 723.6L827.5 720.6L830 723.6L832.5 717.6L834 720.6L835 715.6L836.5 720.6L838.5 721.6L839.5 722.6L841.5 718.6L843.5 722.6L845.5 720.6L847.5 715.6L849.5 718.6L852 718.6L854.5 715.6L855.5 721.6L857.5 721.6L860 720.6L862 721.6L863.5 722.6L864.5 721.6L866.5 719.6L869 717.6L870.5 720.6L872.5 721.6L875 718.6L876 720.6L877 718.6L878 720.6L880 723.6L882 721.6L884.5 721.6L886 721.6L888.5 720.6L891 721.6L892.5 723.6L894 720.6L895 723.6L896.5 722.6L899 722.6L900 718.6L901.5 719.6L903 715.6L905 721.6L906.5 722.6L908 718.6L909 719.6L910 721.6L911 723.6L913.5 721.6L915.5 719.6L918 722.6L919 722.6L920 722.6L922.5 721.6L924 717.6L926 718.6L927.5 721.6L929.5 720.6L931 722.6L932.5 720.6L933.5 720.6L936 722.6L938 721.6L939 721.6L941.5 722.6L943 720.6L945 715.6L947.5 722.6L948.5 720.6L949.5 715.6L951 715.6L952 721.6L954.5 720.6L955.5 719.6L956.5 721.6L958 733.6Z" fill="#0a0a0a"/>
<path d="M268.7 168.9v8.1M724.0 169.8v7.3M735.0 164.7v10.3M554.3 168.9v8.1M97.2 171.6v5.4M146.5 168.9v5.2M335.8 167.3v6.3M349.0 170.6v9.8M774.4 165.1v7.2M715.1 170.6v5.1M377.0 171.3v4.3M554.8 167.9v8.9M398.1 164.1v4.5M696.6 165.0v6.5M634.6 170.8v4.0M617.4 164.1v6.1M250.8 170.6v5.7M147.3 169.2v7.8M311.0 169.4v8.0M41.2 169.3v10.6M272.0 166.6v10.9M869.4 165.1v7.7M230.1 170.7v4.7M52.3 164.5v8.9M202.7 164.9v4.6M164.7 164.0v11.0M406.3 166.0v4.8M545.7 170.5v8.6M209.0 169.4v9.4M491.4 164.2v9.7M70.8 168.6v4.7M206.4 164.6v5.2M291.2 170.8v9.3M566.8 170.0v6.2M891.4 164.5v4.2M754.9 170.3v7.6M160.8 164.4v9.4M195.8 163.3v8.8M678.4 171.0v4.0M842.9 171.3v7.7M316.5 171.0v8.2M60.9 163.8v4.4M350.5 167.9v8.6M929.6 166.4v9.6M471.9 164.7v7.5M248.9 165.4v6.1M51.5 167.4v9.5M651.2 170.1v6.7M612.6 163.2v7.6M716.1 166.3v8.6M605.7 171.0v9.5M768.0 164.8v9.9M230.5 166.3v7.9M839.9 166.4v10.5M851.4 171.1v8.6M378.4 166.0v9.4M328.6 168.2v10.6M219.3 165.6v9.5M635.1 163.5v7.0M292.4 168.9v8.2M910.1 163.7v7.3M393.7 168.9v5.0M522.4 170.9v6.8M446.4 171.3v6.4M949.8 169.9v10.2M390.5 166.8v5.7M207.8 166.0v6.6M858.1 168.1v6.3M145.3 170.1v6.5M781.0 163.7v10.7M296.0 168.7v10.1M757.0 166.1v10.0M926.6 168.1v4.1M816.9 170.7v5.7M541.4 165.7v9.2M647.5 162.7v9.1M721.0 165.6v4.9M721.2 169.3v6.9M492.6 168.6v5.9M283.8 168.9v9.0M657.1 163.2v9.7M58.1 165.7v7.5M662.2 171.4v10.1M850.0 170.5v6.6M298.5 167.0v5.1M581.4 167.5v10.6M462.2 171.5v10.6M260.5 169.9v10.4M486.6 162.6v5.2M564.6 162.8v8.4M232.1 164.6v4.2M525.1 167.9v4.6M909.2 165.8v7.5M932.7 168.4v10.3M310.9 164.1v7.5M47.2 166.8v10.3M192.9 164.3v4.4M295.4 166.9v8.8M868.7 166.3v10.8M743.9 168.4v8.9M261.4 163.6v7.3M594.4 163.2v6.8M652.6 168.3v6.2M759.4 167.3v4.8M886.1 166.0v7.5M391.3 170.2v10.2M43.0 169.1v7.7M633.3 164.0v6.9M74.1 168.1v9.0M379.1 164.3v10.0M116.8 167.6v4.1M509.8 165.3v6.1M576.7 168.4v10.9M847.9 163.7v4.7M577.2 164.1v9.8M681.5 163.2v5.2M169.7 165.1v9.2M113.6 168.0v9.9M756.0 164.0v6.8M478.8 168.6v10.1M681.8 170.3v9.1M396.4 163.3v6.0M204.7 165.5v10.5M64.9 171.6v8.0M226.2 167.7v5.5M697.7 164.5v8.8M816.5 170.4v5.6M813.3 169.5v4.9M271.2 171.3v10.8M890.3 168.2v6.0M620.0 163.7v6.7M857.8 165.2v9.4M579.2 167.0v8.3M865.1 168.8v6.5M545.0 163.6v4.6M23.3 166.9v4.9M912.9 169.6v7.2M731.4 167.6v7.5M935.3 166.3v8.2M31.8 166.8v7.3M463.4 169.0v10.6M923.3 166.8v5.6M533.1 164.2v6.0M932.1 166.4v9.0M214.2 170.0v9.7M257.3 168.2v10.7M262.7 170.8v4.8M374.1 163.0v6.9M638.4 163.7v4.4M356.0 166.8v8.6M241.7 165.8v8.0M413.4 162.9v10.2M591.5 169.9v8.3M108.0 170.1v9.3M74.1 163.5v4.1M744.2 164.5v9.2M740.3 169.8v9.3M802.1 168.9v9.5M22.9 164.9v8.3M16.1 168.4v6.9M799.7 165.8v9.2M515.1 166.6v8.4M541.5 168.8v6.5M101.6 164.9v8.8M403.5 171.3v9.0M739.7 168.5v10.0M348.9 163.6v7.4M80.1 168.6v6.2M858.8 162.8v9.9M506.1 169.3v6.7M339.2 165.7v10.6M185.6 169.1v9.7M497.2 164.6v9.1M154.9 163.5v7.1M133.2 170.6v9.1M508.9 171.4v9.7M931.4 170.8v9.5M196.0 166.4v10.4M821.7 168.6v7.9M442.4 164.7v10.3M8.0 169.8v6.5M842.9 170.7v10.1M904.2 167.6v8.0M881.0 165.4v10.4M729.2 166.5v9.0M824.8 170.1v8.6M825.0 162.7v9.0M449.9 163.7v8.2M114.2 167.1v6.7M669.9 164.4v10.2M5.7 166.5v9.2M215.3 165.0v8.5M232.9 163.4v5.4M1.9 167.4v6.8M900.8 163.0v9.4M43.3 166.6v8.0M396.5 171.2v7.3M458.8 163.0v9.3M844.5 170.7v5.0M506.8 166.1v6.3M488.4 163.0v6.7M841.2 171.0v4.2M620.7 170.8v7.9M586.8 164.5v7.8M675.9 165.6v8.3M438.0 165.6v7.9M200.4 169.9v7.5M801.5 169.7v9.0M704.2 165.6v10.9M586.7 170.8v7.6M648.8 170.8v5.7M843.6 162.7v4.6M262.9 168.8v6.1M473.4 166.4v6.3M184.6 170.9v4.3M653.8 164.7v5.5M369.4 162.7v10.5M550.2 169.7v9.3M719.9 170.9v4.2M57.3 165.0v8.7M130.1 163.4v9.6M53.4 166.0v6.1M245.2 170.4v9.5M810.1 171.3v6.7M156.0 170.1v10.6M628.0 167.3v8.4M721.2 164.8v6.3M769.3 171.5v7.8M326.7 166.7v6.5M781.2 171.6v9.4M229.3 168.5v4.6M155.2 171.3v10.0M407.3 168.6v4.4M117.5 167.5v5.5M52.1 165.6v5.7M877.9 163.2v7.6M743.2 165.9v8.5M209.5 164.8v10.2M683.9 167.7v4.8M907.0 166.1v8.3M160.1 163.1v6.0M374.7 168.5v10.7M88.7 163.8v8.5M592.1 165.7v9.2M136.8 171.0v4.5M374.9 170.9v9.1M513.1 170.9v4.5M533.8 165.1v8.5M488.8 163.7v10.4M431.2 163.5v5.8M378.4 165.3v5.2M946.8 163.7v10.0M441.4 168.7v5.4M371.9 164.5v4.7M200.7 168.4v6.3M598.4 164.0v4.5M86.5 164.6v8.6M299.2 169.2v4.3M461.2 164.1v4.4M243.8 170.8v8.1M60.3 168.9v5.9M890.8 163.2v6.5M519.3 170.0v6.6M705.7 168.3v5.2M635.0 163.7v10.4M159.5 164.8v10.5M29.8 165.8v10.2M730.1 163.9v5.7M854.6 169.2v4.1M96.2 168.2v6.6M270.4 167.3v7.4M106.0 166.6v7.4M387.9 167.2v10.5M870.8 167.8v4.4M183.4 169.2v7.1M229.6 168.6v4.4M487.9 167.2v5.5M585.3 162.6v10.5M360.7 171.1v7.0M54.5 166.9v7.6M303.4 170.7v7.3M448.9 163.1v9.5M126.9 164.3v8.4M94.6 169.1v9.5M66.1 165.3v7.3M247.0 167.0v8.4M776.8 163.5v8.5M657.7 171.3v8.5M739.6 165.6v5.0M349.5 168.1v10.2M308.8 171.2v10.0M628.6 165.7v8.9M16.0 167.5v9.1M430.6 163.9v6.0M933.5 164.0v6.1M301.2 169.8v4.5M24.9 170.1v6.5M463.9 171.0v6.6M816.7 164.9v8.7M203.9 163.4v5.3M450.7 168.8v9.5M260.1 162.8v9.3M31.4 170.0v6.9M678.7 166.5v9.4M228.9 164.1v5.1M777.0 166.1v7.3M524.8 168.1v5.8M538.4 169.1v6.9M871.3 162.6v4.9M308.1 164.8v5.2M405.2 170.9v9.7M756.3 169.3v8.0M214.2 170.2v9.2M926.2 165.2v4.7M417.4 164.2v10.8M865.2 171.0v9.3M168.5 170.4v4.5M361.3 168.9v8.6M675.6 166.4v7.1M478.6 166.8v8.8M354.3 166.9v7.9M417.8 166.3v5.8M366.2 163.9v10.7M616.2 167.9v10.7M247.1 164.2v8.9M55.6 165.5v5.5M314.7 163.3v7.1M326.1 164.8v10.7M851.6 167.4v6.3M929.5 162.8v4.6M929.2 166.7v6.8M129.0 164.9v6.6M678.1 168.2v7.5M349.9 162.6v8.5M841.2 170.6v7.6M846.6 166.1v8.5M449.9 167.5v6.3M520.0 168.5v9.3M301.7 164.3v8.9M647.7 164.6v6.8M113.0 165.9v6.0M527.0 169.8v5.7M567.1 164.7v6.6M813.9 165.8v5.1M62.9 167.5v8.7M734.0 171.2v10.3M570.3 167.9v7.9M28.8 164.4v9.9M83.0 169.4v5.2M167.9 163.5v9.5M227.0 171.4v4.6M85.6 169.8v7.3M71.1 168.5v6.0M715.6 163.7v6.3M887.4 169.2v5.9M61.6 171.1v10.8M127.0 163.8v6.3M480.7 170.3v8.2M947.0 164.4v9.3M803.0 167.8v6.1M16.9 168.8v4.5M452.7 171.0v5.1M760.0 167.5v7.3M779.8 166.0v9.8M452.1 167.7v4.1M893.5 169.7v9.9M438.2 164.8v7.5M499.9 168.6v4.4M219.7 171.4v7.6M203.2 165.1v7.2M184.9 169.9v10.9M952.5 163.5v4.9M60.3 167.4v6.4M674.1 165.5v8.9M770.6 168.0v7.7M293.9 164.6v6.2M281.5 168.7v5.7M168.6 165.9v5.7M29.9 168.7v9.5M687.8 163.8v8.8M456.5 168.8v4.5M631.0 166.0v7.1M64.8 164.4v7.6M430.8 163.9v10.6M401.0 165.3v7.7M746.4 165.1v6.2M49.8 164.7v4.6M882.9 170.4v10.0M902.9 166.6v4.4M655.0 171.3v8.6M815.9 165.7v6.4M497.9 170.3v8.9M685.4 165.0v4.2M870.8 165.6v7.7M670.4 168.8v9.7M578.1 167.9v5.7M370.9 164.3v9.0M347.5 163.6v7.2M528.6 170.8v10.6M899.4 165.1v6.7M217.5 169.9v9.7M726.4 168.1v5.4M753.7 164.9v10.4M470.4 163.8v7.6M767.9 171.4v7.6M779.3 165.3v10.8M589.3 168.8v9.1M812.3 165.5v8.6M54.9 171.6v5.6M329.7 164.5v5.8M38.6 171.3v11.0M218.9 168.7v10.2M908.8 168.9v8.3M378.1 169.0v10.6M13.0 165.5v9.3M736.9 166.5v10.4M782.0 165.8v4.4M851.4 170.1v5.1M294.3 167.1v6.3M418.8 168.8v5.7" stroke="#505018" opacity="0.62" stroke-width="1.1" fill="none"/>
<path d="M682.9 166.2v6.5M857.5 170.2v9.2M741.3 164.7v15.5M835.7 167.3v15.1M759.7 164.9v15.8M905.5 167.8v10.6M717.0 164.9v13.3M346.0 171.1v7.2M848.6 164.4v6.3M354.7 166.7v11.0M51.2 164.7v12.4M298.5 167.8v9.8M611.5 164.5v11.8M305.5 168.8v14.4M707.6 168.8v15.1M574.5 163.6v15.0M66.4 168.0v6.1M914.7 169.8v8.1M519.9 164.2v12.6M826.2 166.4v11.7M442.2 167.0v6.2M126.2 163.6v7.8M279.2 167.5v13.4M98.1 165.2v12.0M56.2 168.7v15.4M706.1 170.3v12.4M74.6 168.3v9.3M949.0 167.5v15.7M470.7 165.6v6.1M833.9 166.8v9.8M796.1 164.4v7.6M17.8 166.4v14.8M108.8 167.0v6.5M54.0 167.6v15.0M814.7 165.9v13.1M206.6 167.9v7.5M205.0 170.4v10.4M30.1 170.5v12.9M578.6 169.7v8.2M601.8 171.2v13.7M768.4 164.4v7.7M749.3 167.3v8.3M786.8 169.7v7.7M835.0 163.8v13.2M106.0 167.9v11.9M207.3 164.9v10.2M489.4 167.7v6.0M832.0 164.7v15.0M535.7 168.3v9.2M165.0 169.9v11.4M391.3 165.8v16.0M218.7 164.6v9.6M417.8 169.1v12.3M426.9 170.5v11.9M120.0 169.2v10.2M804.0 165.5v11.9M453.3 169.4v11.2M452.1 167.5v11.0M223.7 168.8v9.8M67.6 170.8v13.3M321.8 166.0v14.4M618.1 167.9v14.3M524.8 171.3v13.8M456.8 167.5v13.1M649.5 164.0v12.2M150.6 166.4v13.5M4.7 166.1v12.3M649.0 168.4v9.3M547.3 169.8v14.0M150.5 167.2v12.5M274.1 170.5v15.0M933.6 166.7v14.1M422.4 169.4v11.2M20.0 167.2v13.9M311.8 164.1v7.2M244.3 166.7v11.7M820.4 171.5v14.0M65.2 165.1v12.3M12.5 164.5v8.9M474.3 164.1v9.8M73.4 169.9v13.4M135.4 169.1v8.2M418.4 170.6v15.7M868.0 170.7v7.4M527.6 163.8v13.7M143.0 164.9v6.4M476.0 165.8v10.2M602.9 165.9v7.8M121.8 169.2v6.8M154.4 171.3v9.3" stroke="#8c8440" opacity="0.4" stroke-width="1.1" fill="none"/>
<path d="M664.9 171.9v28.9M103.4 171.8v25.7M900.8 171.8v18.6M820.3 171.3v27.3M427.5 170.7v15.7M644.7 169.0v20.0M854.5 169.4v33.8M627.4 170.8v33.7M866.6 169.5v31.4M846.5 172.5v28.2M23.0 170.1v34.8M489.9 172.0v16.4M752.9 170.5v29.9M659.1 172.0v34.4M479.3 168.9v36.1M898.4 169.2v25.9M675.5 171.8v26.4M634.5 171.3v29.4M555.5 168.7v19.8M856.7 171.8v44.8M202.7 169.9v33.4M5.1 170.3v24.8M615.2 170.4v39.0M323.0 170.3v31.4M911.2 169.2v44.7M471.4 169.3v16.4M410.3 172.3v27.4M282.1 170.6v36.2" stroke="#a06a98" opacity="0.3" stroke-width="1.1" fill="none"/>
<path d="M5.2 173.1v7.1M360.9 171.3v10.8M417.2 171.3v12.5M78.8 173.9v8.9M35.1 171.6v8.4M63.2 175.1v12.3M197.6 173.6v10.0M504.8 172.0v11.5M620.0 174.9v11.1M304.7 172.5v11.6M917.1 176.3v12.7M776.6 174.8v10.8M827.9 172.2v13.5M337.2 171.5v12.9M249.3 173.6v9.6M25.4 176.1v12.3M845.6 175.3v10.8M838.5 176.1v8.3M803.9 172.9v13.7M617.8 172.1v11.2M802.5 175.0v7.3M867.5 175.3v12.9M215.0 175.0v6.5M155.0 170.6v8.4M950.8 176.2v9.1M598.2 170.8v7.7M399.0 173.8v8.5M58.8 174.3v11.2M460.7 173.4v7.6M248.4 173.5v7.0M305.3 171.3v13.3M860.3 173.8v13.5M539.4 176.0v10.0M932.3 174.6v8.7M92.2 174.3v6.9M928.1 173.6v8.3M316.7 173.1v7.4M737.6 174.7v9.7M915.7 173.9v9.0M744.7 171.0v11.6M460.6 171.0v7.6M917.0 172.6v7.4M181.1 175.5v8.3M679.5 172.3v10.7M403.0 175.3v6.6M493.3 172.6v12.0M227.8 175.9v8.3M97.3 175.4v10.6M639.2 175.0v13.8M84.7 174.9v13.2M663.6 173.5v8.8M679.9 173.4v7.4M548.9 170.7v13.2M215.3 175.3v7.0M560.7 172.2v13.7M646.1 174.3v13.9M26.7 173.0v11.6M406.8 171.6v13.1M492.8 174.0v13.0M22.1 176.4v6.4M409.7 173.4v9.1M356.4 174.4v7.1M879.7 174.4v10.3M156.4 175.7v6.9M762.8 175.9v8.5M543.2 176.0v10.0M443.9 172.1v11.8M226.8 175.8v13.4M6.5 171.2v8.9M740.6 171.6v10.7M411.5 173.7v6.3M933.6 170.6v6.4M945.3 175.2v6.3M885.4 175.4v8.1M740.9 172.1v8.7M76.4 172.1v6.6M745.7 173.9v11.5M165.5 174.0v13.5M102.5 173.5v13.4M562.2 173.6v13.9M703.6 172.1v12.5M756.4 174.9v6.3M46.7 173.5v12.0M183.8 174.2v7.8M201.3 175.0v9.6M230.6 173.8v11.6M633.7 176.0v9.3M513.6 174.9v8.9M238.2 172.6v8.6M37.2 174.1v12.8M67.1 176.1v6.5M184.5 175.0v11.0M366.6 172.5v8.0M95.8 171.1v10.5M429.2 176.2v10.7M853.6 175.8v6.5M419.1 172.6v6.2M177.7 170.7v11.8M755.7 171.9v6.6M767.5 175.2v7.8M907.7 175.0v7.4M794.4 174.2v12.6M155.7 174.0v7.4M127.2 173.3v9.4M225.9 171.2v11.3M250.2 175.9v12.5M88.9 175.3v7.2M836.6 176.1v8.4M565.2 171.5v12.0M535.4 171.0v9.5M913.1 171.9v12.7M510.7 174.7v7.6M696.4 175.8v8.8M535.5 170.7v11.0M631.5 175.8v6.2M411.8 173.0v6.3M281.3 175.9v11.0M427.3 174.4v9.8M674.4 171.4v10.3M521.1 174.8v12.6M31.4 175.1v8.6M652.7 172.2v12.9M679.0 173.9v6.7M345.5 172.7v12.6M941.1 174.0v11.9M245.6 174.4v6.1M525.3 174.5v9.3M419.2 172.9v13.1M831.1 174.8v12.4M326.4 173.8v11.8M705.6 175.5v6.8M189.4 171.2v6.3M126.4 174.6v9.4M916.7 174.9v7.2M148.1 172.8v11.7M337.7 176.2v11.4M235.6 176.4v7.4M52.5 174.1v7.2M750.7 173.5v6.9M260.7 173.5v14.0M945.9 170.7v9.1M178.7 171.9v11.9M110.1 174.7v7.0M34.5 172.3v7.7M554.9 173.2v7.9M95.0 172.4v12.8M231.1 173.8v12.2M844.2 175.9v10.6M494.3 171.5v6.7M441.0 175.2v9.5M950.5 171.1v6.1M219.2 174.6v9.2M626.1 174.1v8.7M231.0 172.8v10.2M526.9 174.8v9.8M683.6 173.8v6.1M635.2 173.8v10.8M168.5 173.0v9.8M915.2 175.6v13.6M936.9 172.0v12.0M898.5 171.3v8.5M833.9 172.4v6.5M866.2 175.5v6.0M393.3 173.9v13.4M333.5 174.4v11.7M96.8 173.4v6.9M278.5 173.4v7.8M371.5 171.5v10.8M535.7 175.0v12.1M591.9 172.3v12.7M350.9 170.7v11.1M132.5 172.6v6.9M155.3 176.5v13.2M213.5 176.6v14.0M190.0 173.4v8.9M248.0 175.6v11.6M158.4 171.1v12.5M56.7 174.3v13.1M307.6 174.2v6.3M522.8 171.8v10.3M65.5 175.6v7.5M776.6 173.6v11.6M737.5 172.6v13.0M278.6 173.4v11.7M701.5 175.9v8.2M288.8 175.4v13.8M753.9 171.0v12.7M643.3 172.1v8.6M121.7 171.5v9.9M526.6 175.6v6.5M895.3 176.1v11.0M566.9 172.5v10.1M142.1 171.8v6.6M866.9 170.9v6.2M592.4 175.2v6.7M790.7 173.9v7.9M175.4 174.7v11.1M577.7 175.8v9.0M870.6 176.5v11.8M49.4 172.4v11.4" stroke="#7a1a40" opacity="0.35" stroke-width="1.1" fill="none"/>
<path d="M288.5 728.9v-4.6M196.9 732.1v-8.2M929.0 726.3v-4.0M57.3 722.6v-6.2M908.2 727.9v-7.4M575.2 731.0v-6.7M519.9 723.9v-9.6M794.0 731.8v-5.5M259.8 732.0v-7.6M128.3 722.9v-4.3M91.8 724.8v-9.5M442.2 723.5v-7.4M597.7 729.3v-9.6M677.7 724.2v-5.1M475.4 731.4v-10.5M150.4 729.3v-7.0M177.4 732.2v-5.5M906.5 727.8v-5.7M547.0 731.2v-5.8M334.3 720.3v-6.0M568.2 730.4v-6.2M773.0 730.8v-6.1M759.2 720.5v-7.9M539.5 731.2v-8.9M163.4 728.0v-4.7M929.1 724.7v-7.3M798.7 728.6v-7.1M811.4 720.8v-5.2M858.4 723.0v-8.5M415.9 722.5v-4.7M691.2 730.4v-5.1M561.6 721.3v-8.5M465.8 720.0v-10.9M834.0 724.8v-10.2M618.6 720.0v-7.0M813.6 732.4v-8.4M569.3 731.8v-5.2M332.5 720.1v-9.6M938.7 720.8v-6.1M242.4 730.0v-9.6M58.3 726.6v-10.3M189.7 721.5v-5.8M797.8 722.3v-5.3M1.2 731.5v-5.6M233.0 730.9v-6.9M722.2 730.7v-4.8M717.7 724.9v-7.4M23.1 721.8v-6.5M300.6 724.0v-8.6M511.0 721.7v-6.9M592.5 729.9v-9.2M648.0 726.8v-7.7M725.3 722.4v-9.8M866.8 730.1v-5.5M47.9 721.6v-10.7M863.7 732.5v-7.6M114.2 728.2v-10.3M412.9 718.7v-5.8M467.8 720.8v-5.3M782.9 730.8v-7.0M608.6 731.7v-5.0M376.8 718.6v-6.1M366.1 728.7v-7.6M222.3 719.6v-4.3M76.5 719.2v-6.1M761.5 728.2v-5.1M88.7 727.6v-11.0M286.8 729.5v-10.4M674.8 727.2v-8.5M708.4 731.1v-4.8M444.6 725.4v-7.1M103.0 731.6v-6.7M192.1 725.3v-9.0M363.0 725.9v-7.9M798.4 726.8v-8.6M252.0 731.5v-5.1M373.6 727.1v-6.5M577.7 721.0v-5.0M261.8 730.3v-4.9M16.9 719.7v-8.3M635.3 729.7v-10.4M421.5 729.3v-4.7M766.0 724.3v-7.5M782.9 729.9v-6.5M764.3 719.8v-4.2M482.6 727.5v-9.7M529.4 727.1v-4.5M277.9 732.2v-7.1M561.2 723.0v-10.8M539.5 732.3v-7.8M628.5 722.9v-4.4M107.9 724.6v-8.0M206.4 730.3v-10.0M648.8 722.7v-8.0M21.4 725.0v-6.3M527.2 727.5v-7.6M91.0 725.8v-6.4M353.5 723.0v-9.8M279.4 722.9v-5.7M874.6 725.8v-8.2M573.0 722.0v-7.0M445.7 731.8v-10.0M767.3 720.5v-7.8M123.4 729.9v-4.1M247.0 728.4v-6.5M660.5 731.6v-6.8M167.3 727.7v-6.1M766.8 721.2v-8.5M506.4 724.5v-10.3M916.9 724.1v-8.8M188.1 727.9v-7.9M934.2 722.6v-8.6M383.2 724.1v-6.7M135.7 725.8v-6.4M532.7 719.1v-4.6M654.0 719.7v-7.9M165.9 723.6v-9.5M853.9 725.0v-6.3M575.9 732.4v-10.2M176.9 726.2v-5.2M85.7 731.1v-7.7M458.4 730.7v-7.7M138.2 726.3v-10.9M777.6 732.2v-6.0M79.5 721.5v-10.4M908.4 721.7v-7.3M422.2 727.4v-9.5M90.8 731.8v-6.8M230.9 726.9v-7.2M402.1 727.9v-4.6M429.7 721.6v-4.4M549.6 719.0v-9.9M732.0 726.9v-8.4M561.8 731.0v-7.4M141.0 724.2v-10.3M443.5 723.4v-5.1M87.0 732.4v-9.5M635.4 723.3v-7.0M186.2 722.7v-8.8M46.3 725.6v-7.5M37.5 722.2v-9.2M902.6 722.2v-5.9M412.1 725.9v-7.1M447.5 726.5v-10.4M659.4 721.1v-4.8M711.2 728.1v-8.9M201.3 721.5v-8.7M180.8 723.3v-9.1M461.8 719.3v-9.9M778.8 719.4v-7.1M65.3 719.0v-10.2M711.6 725.7v-4.6M222.8 720.5v-4.4M393.8 723.4v-8.4M398.4 719.4v-10.2M9.9 719.1v-9.5M413.2 721.7v-10.9M26.7 730.4v-10.0M821.9 725.5v-7.5M358.2 720.0v-6.6M302.7 732.0v-8.4M392.4 732.0v-7.5M504.8 720.1v-4.7M630.6 725.6v-7.0M483.4 718.9v-9.1M450.0 729.3v-9.9M291.8 727.1v-6.9M571.0 728.0v-4.0M454.7 731.2v-6.5M448.9 720.0v-8.4M577.8 719.3v-6.1M225.5 730.2v-6.8M849.1 729.8v-8.6M412.5 731.0v-8.4M555.8 720.6v-9.1M291.6 731.2v-4.3M277.8 727.9v-5.0M679.5 728.4v-9.4M234.6 731.3v-5.2M252.0 728.9v-9.9M713.8 728.7v-10.9M736.8 727.2v-5.0M770.9 730.1v-4.7M421.0 731.0v-10.7M147.8 724.9v-9.9M920.8 722.6v-6.6M505.6 729.7v-4.4M117.8 730.3v-4.0M799.7 728.1v-9.2M313.0 719.6v-6.7M890.7 726.2v-4.3M840.5 730.5v-7.2M718.9 725.4v-9.9M116.4 731.0v-5.1M294.7 731.2v-4.4M873.5 722.2v-10.3M174.9 724.7v-7.7M772.5 732.3v-10.8M124.7 721.2v-8.9M376.3 720.6v-8.7M429.3 729.9v-8.2M176.4 727.2v-6.6M146.3 728.3v-4.1M835.7 721.4v-6.1M7.0 723.1v-9.2M880.6 728.1v-9.6M517.6 724.8v-4.7M385.3 721.1v-5.5M892.7 718.7v-10.4M384.6 720.4v-7.2M51.4 731.8v-8.4M112.6 724.2v-5.4M562.9 724.7v-6.4M434.9 723.7v-10.0M839.1 719.5v-6.9M280.1 720.2v-7.1M425.8 721.2v-10.1M761.4 722.9v-8.4M86.6 720.3v-4.4M425.5 724.6v-7.5M378.7 721.8v-8.9M613.8 725.8v-5.3M6.9 730.9v-9.9M922.8 723.4v-8.5M533.6 728.7v-4.6M376.1 720.8v-6.9M123.6 723.1v-9.8M276.1 730.8v-9.4M564.6 727.2v-8.3M166.7 722.2v-7.5M16.2 728.5v-9.6M263.5 726.1v-7.5M838.7 730.8v-7.0M20.3 732.5v-9.1M668.2 728.2v-4.6M609.9 732.5v-6.2M194.9 723.8v-8.6M656.8 725.0v-7.0M373.0 721.8v-6.2M110.8 729.1v-9.3M895.9 727.9v-8.0M605.9 722.0v-8.4M485.9 732.5v-6.3M369.6 732.6v-9.1M36.5 725.6v-7.6M633.4 730.0v-4.4M285.9 719.7v-5.5M477.4 722.8v-10.3M392.3 719.7v-9.1M166.2 721.5v-4.6M147.1 726.0v-9.2M346.6 720.6v-6.3M410.2 720.3v-4.6M311.6 730.7v-6.8M695.9 723.8v-10.9M256.2 725.1v-5.1M730.1 731.8v-10.3M726.7 720.5v-9.0M777.0 729.3v-4.5M291.3 723.7v-5.9M226.8 729.9v-7.9M368.0 727.3v-6.2M10.1 728.3v-7.0M605.6 723.8v-7.5M548.5 721.7v-5.5M606.7 726.5v-7.3M341.4 728.4v-10.4M80.3 730.7v-8.0M720.2 726.8v-8.8M603.6 727.7v-7.5M417.1 727.7v-8.2M201.2 732.4v-7.3M850.7 723.2v-9.4M665.6 722.7v-8.8M131.9 729.2v-9.6M597.7 730.4v-6.0M471.1 721.2v-10.4M945.4 724.2v-4.2M284.7 731.4v-5.4M141.3 724.4v-6.0M358.0 726.8v-10.7M291.0 729.2v-6.9M615.1 725.0v-10.2M732.2 728.1v-10.4M329.5 727.8v-10.8M697.7 721.7v-5.6M746.2 729.8v-5.8M328.1 728.8v-8.5M270.5 725.8v-10.7M132.3 723.7v-8.5M328.2 725.7v-7.0M83.9 731.5v-7.5M351.0 725.8v-9.7M41.6 724.5v-8.4M251.6 721.1v-7.5M873.1 722.0v-5.8M660.4 721.9v-5.7M237.0 721.4v-7.7M126.0 728.1v-7.5M824.0 723.8v-4.4M636.9 721.8v-7.6M456.2 719.2v-6.4M82.8 723.5v-7.4M491.5 731.0v-10.7M604.6 725.8v-5.0M360.5 722.8v-8.1M320.7 719.7v-7.4M751.7 721.5v-9.4M20.1 725.5v-7.4M191.3 725.6v-10.8M659.8 725.0v-10.8M215.3 729.3v-6.4M144.0 721.3v-7.9M615.1 723.7v-4.5M100.7 726.2v-6.1M598.8 729.9v-7.2M259.3 723.4v-9.7M795.2 721.2v-5.2M196.3 723.4v-8.1M180.9 728.8v-4.4M640.8 726.0v-9.9M42.9 720.4v-7.7M467.7 731.8v-8.6M243.0 731.4v-6.9M541.7 726.0v-5.9M442.0 721.5v-10.0M233.4 719.0v-8.5M646.0 722.4v-7.4M346.9 731.2v-7.0M667.7 725.7v-10.9M477.5 726.8v-9.9M835.5 724.3v-5.0M738.2 721.0v-9.4M387.2 730.9v-7.5M891.2 722.5v-4.6M111.2 731.6v-6.5M94.6 730.5v-7.7M176.1 725.8v-5.0M89.2 721.8v-5.6M46.0 721.1v-4.6M457.5 730.8v-8.6M838.1 721.6v-6.9M718.5 727.5v-5.0M652.4 725.1v-7.3M41.6 726.4v-5.5M320.4 731.3v-9.1M422.5 720.2v-9.2M320.6 725.9v-10.6M554.2 720.7v-8.8M46.5 722.4v-4.1M553.1 724.5v-4.4M316.2 727.4v-4.5M230.6 725.9v-7.6M141.9 722.3v-6.1M583.3 724.8v-6.3M110.0 725.5v-5.2M115.6 719.1v-8.0M145.7 719.3v-9.0M832.9 728.0v-10.4M869.6 721.9v-8.7M429.6 730.2v-10.1M864.5 724.8v-4.8M179.0 729.9v-9.5M350.3 723.5v-9.7M675.3 729.6v-10.4M926.5 724.5v-5.5M693.7 724.8v-8.1M754.5 731.7v-9.4M125.6 728.3v-4.1M391.9 725.6v-9.0M956.5 726.8v-7.1M208.8 731.1v-4.6M586.0 730.4v-9.1M496.1 732.1v-9.1M63.4 730.8v-4.1M240.4 731.7v-5.2M479.2 730.4v-7.1M308.9 721.5v-10.0M513.2 720.7v-10.9M256.7 731.4v-8.8M428.0 728.8v-6.1M671.3 721.6v-8.3M562.6 724.8v-10.1M694.3 721.0v-9.7M292.5 730.5v-10.9M149.0 723.7v-4.3M791.0 727.6v-5.2M877.0 723.3v-5.4M938.8 730.2v-4.9M874.3 732.6v-9.7M491.3 727.0v-5.0M616.7 732.4v-9.4M254.5 728.0v-9.2M179.2 732.1v-4.6M105.3 722.8v-7.5M572.9 732.4v-9.8M753.6 728.1v-8.9M53.0 729.0v-8.0M630.2 726.6v-4.2M542.4 730.7v-4.5M602.5 730.7v-5.3M468.3 726.2v-9.6M435.4 730.5v-6.1M948.5 729.3v-6.8M746.5 729.6v-7.9M679.0 729.1v-10.7M815.7 727.1v-9.0M310.7 722.4v-8.3M224.8 729.5v-4.6M366.1 726.6v-8.6M325.8 722.4v-8.4M828.5 732.0v-7.6M283.3 726.7v-10.3M529.5 719.0v-6.6M492.5 720.5v-10.7M402.0 726.7v-5.2M357.0 719.8v-8.6M800.9 719.0v-4.4M176.6 722.9v-9.7M830.0 732.1v-7.5" stroke="#505018" opacity="0.62" stroke-width="1.1" fill="none"/>
<path d="M152.0 730.2v-11.2M519.7 722.4v-7.4M430.3 724.4v-7.4M290.7 720.4v-8.6M230.6 723.4v-12.3M507.0 726.5v-9.7M715.0 719.8v-12.0M530.7 726.8v-12.9M543.4 726.5v-7.2M314.9 729.8v-6.2M94.6 720.9v-13.5M403.9 730.9v-8.1M54.0 728.3v-8.2M120.5 723.1v-11.2M884.3 724.5v-11.2M42.8 722.6v-11.7M97.8 722.7v-6.4M680.9 725.5v-11.5M341.4 725.8v-10.7M430.6 720.4v-6.6M830.9 726.8v-11.6M629.0 724.2v-6.3M887.3 722.3v-13.3M173.6 730.5v-10.3M128.5 721.8v-11.4M912.7 724.3v-11.0M794.1 718.6v-7.9M216.5 728.0v-12.0M888.5 723.5v-13.0M143.6 729.7v-12.9M726.7 726.1v-13.7M774.3 718.7v-12.7M222.8 722.7v-10.5M750.1 730.6v-6.3M418.0 720.2v-11.0M124.5 726.4v-11.3M317.8 727.1v-11.7M928.5 727.8v-10.4M527.1 718.7v-9.8M792.7 723.8v-10.5M27.3 725.0v-13.3M449.4 719.7v-9.2M223.5 727.1v-11.2M426.2 725.6v-12.8M891.8 726.1v-10.2M516.7 724.9v-12.8M943.5 721.4v-9.4M396.2 725.2v-11.7M519.4 730.6v-11.3M200.4 721.7v-7.9M327.3 723.8v-8.3M15.5 724.0v-13.4M754.2 723.7v-11.8M728.0 726.1v-11.0M163.4 724.5v-12.9M384.6 719.9v-13.6M309.5 726.9v-10.1M27.4 728.0v-13.5M830.6 721.6v-9.0M585.3 726.4v-8.6M557.4 730.5v-9.1M719.5 730.9v-13.1M316.7 727.9v-12.5M136.9 728.9v-6.2M811.4 729.8v-9.7M940.8 722.7v-7.8M480.8 718.6v-7.7M392.1 722.0v-8.7M512.4 719.6v-10.3M666.6 726.9v-6.6M532.3 727.8v-9.1M551.3 730.4v-12.1M332.1 718.9v-8.4M16.6 719.2v-6.5M528.5 725.5v-9.7M569.2 723.0v-10.3M244.6 719.9v-13.7M710.5 728.8v-12.8M430.6 721.7v-7.4M685.0 729.1v-13.5M326.2 729.3v-9.8M747.0 721.9v-11.0M549.8 729.2v-6.7M937.4 725.7v-12.9M55.9 729.0v-12.6M329.5 723.9v-12.8M283.9 721.1v-11.5M789.0 725.7v-7.0M424.4 726.3v-11.4M685.4 727.9v-13.9" stroke="#9a9440" opacity="0.42" stroke-width="1.1" fill="none"/>
<path d="M27.1 722.7v-23.0M58.6 719.2v-21.0M102.2 720.3v-38.3M612.3 719.0v-20.8M95.5 721.1v-17.8M416.7 723.6v-38.4M761.2 720.4v-18.9M364.7 720.3v-28.4M650.6 718.2v-29.0M473.3 718.0v-21.0M761.8 722.7v-17.1M647.4 720.1v-39.4M361.8 718.4v-36.6M475.3 723.2v-22.2M92.0 721.2v-37.4M153.7 719.8v-29.9M780.0 719.0v-26.1M782.5 722.8v-27.6M473.8 720.8v-34.7M137.8 719.0v-35.9M317.5 718.0v-17.9M173.3 720.4v-39.2M841.8 720.4v-25.1M555.1 720.7v-19.7M941.9 723.2v-18.2M723.4 719.7v-23.1M201.3 721.5v-19.8M892.0 718.8v-37.6" stroke="#8a7a30" opacity="0.35" stroke-width="1.1" fill="none"/>
<path d="M901.0 721.2v-12.0M809.2 714.1v-11.3M14.1 719.3v-13.6M24.5 721.3v-13.8M799.9 719.6v-8.8M802.6 713.7v-11.1M596.2 717.2v-10.7M151.8 720.3v-11.7M445.0 718.2v-12.1M827.1 717.3v-8.3M853.2 713.7v-12.2M70.4 717.1v-12.3M502.2 720.5v-12.3M459.5 720.3v-6.7M845.9 715.8v-9.1M840.0 717.9v-11.0M915.0 716.8v-7.8M657.1 718.5v-11.5M497.2 719.2v-13.7M543.9 714.9v-10.2M607.1 718.7v-6.1M169.5 715.5v-7.4M954.9 716.7v-12.9M331.6 718.9v-10.0M789.8 715.2v-8.4M7.8 715.2v-13.8M198.0 717.2v-13.5M223.0 713.9v-8.7M371.7 715.4v-13.5M369.0 714.3v-6.8M518.6 717.5v-12.9M84.7 719.2v-6.3M36.1 714.6v-13.1M507.0 718.6v-9.4M229.6 716.4v-11.1M325.5 717.3v-14.0M429.9 721.3v-9.7M819.5 715.3v-7.8M289.3 720.8v-11.3M555.4 719.9v-10.4M622.0 719.5v-10.3M699.2 714.2v-13.9M703.2 718.7v-12.8M154.9 714.9v-10.3M350.5 720.2v-9.9M779.6 719.1v-12.9M129.9 715.7v-8.6M141.5 717.6v-8.5M569.4 718.9v-11.2M77.7 717.4v-11.3M797.0 717.5v-7.1M902.5 717.2v-13.9M6.0 715.1v-10.3M182.4 718.4v-12.5M508.1 718.9v-7.6M549.7 720.4v-8.4M848.4 714.5v-9.6M112.0 718.1v-13.8M892.9 721.4v-8.2M189.6 716.8v-6.9M399.1 715.6v-9.3M407.0 717.8v-7.3M826.9 714.8v-11.3M136.8 719.8v-11.6M949.4 717.5v-13.6M198.7 715.1v-9.1M449.3 719.2v-8.6M633.4 721.4v-6.5M889.3 713.7v-11.4M550.3 721.3v-12.0M101.4 716.6v-13.5M403.5 721.3v-9.0M699.3 718.1v-10.5M954.6 719.1v-7.3M652.6 720.9v-12.4M886.6 714.0v-8.4M196.6 714.9v-9.2M869.5 717.0v-9.8M704.3 714.2v-12.3M395.8 715.7v-8.4M927.3 717.1v-11.9M679.9 720.5v-11.6M42.2 717.6v-10.0M625.8 714.9v-12.7M286.6 717.5v-6.6M844.0 717.1v-13.8M458.0 715.8v-8.7M592.6 717.3v-11.0M83.3 716.5v-7.2M745.7 716.2v-9.3M579.3 720.2v-7.2M924.6 720.8v-7.8M317.3 714.6v-10.5M559.3 717.8v-6.3M567.7 720.3v-7.9M660.7 719.4v-7.1M956.8 718.1v-13.2M295.8 716.9v-9.9M360.4 717.6v-7.6M494.8 715.5v-9.9M171.3 719.5v-10.4M906.6 717.4v-12.9M948.0 717.6v-11.5M245.5 714.2v-12.1M97.1 717.5v-7.8M76.0 720.6v-8.9M815.5 720.9v-7.0M794.8 719.2v-7.6M476.5 718.4v-7.8M255.4 713.6v-9.2M691.8 719.4v-7.9M811.9 715.9v-6.9M279.6 720.4v-8.0M609.6 720.9v-11.2M590.1 720.9v-13.6M128.8 713.7v-7.7M753.4 716.4v-8.3M890.7 714.0v-8.5M444.4 715.4v-8.0M150.3 719.8v-13.0M109.4 715.6v-13.8M208.0 720.6v-7.3M301.2 716.2v-9.0M174.5 714.8v-13.6M386.3 719.8v-9.9M63.3 714.3v-14.0M154.2 719.5v-6.8M225.9 716.2v-11.2M739.4 721.3v-10.2M94.6 719.2v-12.6M120.5 717.7v-9.8M714.5 720.3v-6.7M314.2 714.3v-9.2M323.6 715.5v-10.8M532.6 714.0v-8.7M338.8 718.6v-12.4M788.3 721.3v-7.9M468.5 715.3v-11.5M5.5 714.7v-12.1M660.9 721.3v-6.6M168.8 718.2v-7.7M877.7 714.4v-8.7M229.5 721.5v-12.6M174.4 715.2v-9.4M485.8 713.9v-6.8M171.6 714.0v-11.9M277.0 719.5v-9.0M382.4 717.4v-6.3M871.4 714.2v-9.6M56.3 719.0v-9.7M365.2 718.4v-9.4M51.1 720.3v-10.7M13.0 714.8v-13.0M250.6 717.9v-10.0M828.3 720.9v-6.7M110.4 714.6v-6.2M829.8 716.7v-12.5M230.1 716.2v-7.1M288.8 719.0v-9.0M296.7 718.3v-11.0M25.9 720.7v-8.4M590.9 715.7v-8.4M362.4 715.4v-6.7M440.9 719.9v-6.9M494.4 720.5v-8.4M619.0 717.5v-9.9M671.5 717.0v-6.1M337.3 713.9v-6.4M905.8 716.7v-8.6M919.0 714.3v-6.2M524.3 716.5v-8.0M154.2 716.7v-9.0M365.2 714.4v-11.0M42.4 716.7v-10.2M18.2 714.8v-8.8M649.8 714.3v-12.2M185.0 720.3v-14.0M873.8 721.3v-13.8M257.8 721.3v-9.3M645.7 715.1v-10.6M344.3 714.5v-13.5M810.0 719.8v-9.5M900.1 718.5v-8.6M721.0 720.9v-13.2M680.5 720.8v-12.8M207.6 714.7v-6.8M752.6 718.3v-9.0M345.3 721.5v-8.6M867.4 719.9v-12.7M699.3 714.7v-10.3M245.3 716.0v-7.8M540.0 720.9v-8.5M516.4 714.9v-8.4M348.4 716.6v-12.1M458.4 714.1v-13.0M609.6 714.4v-6.8M143.4 721.6v-8.6M956.4 721.2v-9.4M766.8 715.3v-10.7M71.2 717.4v-11.3" stroke="#7a1a40" opacity="0.35" stroke-width="1.1" fill="none"/>
<path d="M467.9 1H491.1L479.5 12.6Z" fill="none" stroke="#ee9a80" stroke-width="1.2"/>
<path d="M469.5 14.6H489.5V31.6L479.5 43L469.5 31.6Z" fill="#f78f1c" stroke="#f9b25a" stroke-width="0.9"/>
<text x="479.3" y="29.3" text-anchor="middle" font-family="Liberation Sans, sans-serif" font-size="15" font-weight="bold" fill="#3a1400">T</text>
<path d="M1 435.9H26L34 445.4L26 454.9H1Z" fill="#fb18fb" stroke="#3a0040" stroke-width="1.7"/>
<text x="12" y="450.4" text-anchor="middle" font-family="Liberation Sans, sans-serif" font-size="14.6" fill="#a428a4">3</text>
<path d="M958 435.4H933L923.5 445.4L933 455.4H958Z" fill="#f7881a"/>
<path d="M958 445.4H931" stroke="#f7881a" stroke-width="20" opacity="0"/>
<text x="943.8" y="450.6" text-anchor="middle" font-family="Liberation Sans, sans-serif" font-size="14" font-weight="bold" fill="#2a1400">T</text>
<path d="M957.5 176.6V715.6" stroke="#d848d8" stroke-width="1" opacity="0.8"/>
<g font-family="Liberation Sans, sans-serif" font-size="15.7" fill="#e33be3" stroke="#e33be3" stroke-width="0.5"><text x="948.5" y="118.4" text-anchor="end">297mV</text><text x="948.5" y="786.5" text-anchor="end">-297mV</text></g>
<g font-family="Liberation Sans, sans-serif" font-size="15.6" fill="#f7941d" stroke="#f7941d" stroke-width="0.3"><text x="96.7" y="882.0" text-anchor="middle">-40µs</text><text x="192.4" y="882.0" text-anchor="middle">-30µs</text><text x="288.1" y="882.0" text-anchor="middle">-20µs</text><text x="383.8" y="882.0" text-anchor="middle">-10µs</text><text x="479.5" y="882.0" text-anchor="middle">0s</text><text x="575.2" y="882.0" text-anchor="middle">10µs</text><text x="670.9" y="882.0" text-anchor="middle">20µs</text><text x="766.6" y="882.0" text-anchor="middle">30µs</text><text x="862.3" y="882.0" text-anchor="middle">40µs</text></g>
</svg>
<div class="abs " style="left:0px;top:101.4px;width:1.5px;height:891.6px;background:#15171a"></div>
<div class="abs " style="left:0px;top:992.8px;width:964px;height:2.6px;background:#a9abad"></div>
<!-- ===== results window ===== -->
<div class="abs " style="left:964px;top:72.3px;width:958px;height:29.1px;background:#3f454c"></div>
<div class="t " style="left:969.5px;top:79.9px;font-size:17.6px;color:#fff;letter-spacing:-0.08px">1000Base-T1 Test Results (Ref: IEEE 802.3bp)</div>
<svg class="abs" style="left:1833px;top:79.2px" width="24" height="16" viewBox="0 0 24 16"><path d="M0 1.5H23M0 8H23M0 14.5H23" stroke="#fff" stroke-width="2.2"/></svg>
<svg class="abs" style="left:1884.5px;top:76.3px" width="22" height="22" viewBox="0 0 22 22"><path d="M1.5 1.5L20 20M20 1.5L1.5 20" stroke="#fff" stroke-width="2.1"/></svg>
<table id="res" class="abs" style="left:964px;top:101.4px"><thead><tr><th>Measuring Item</th><th>Measured Value</th><th>Minimum</th><th>Maximum</th><th>Result</th></tr></thead><tbody>
<tr><td>Master RMS Jitter</td><td>0.00ps</td><td>0ps</td><td>5ps</td><td class="na">-----</td></tr>
<tr><td>Master Peak-to-Peak Jitter</td><td>0.00ps</td><td>0ps</td><td>50ps</td><td class="na">-----</td></tr>
<tr><td>Slave RMS Jitter</td><td>0.00ps</td><td>0ps</td><td>10ps</td><td class="na">-----</td></tr>
<tr><td>Slave Peak-to-Peak Jitter</td><td>0.00ps</td><td>0ps</td><td>100ps</td><td class="na">-----</td></tr>
<tr><td>MDI RMS Jitter</td><td>1.98ps</td><td>0ps</td><td>5ps</td><td class="ok">Passes</td></tr>
<tr><td>MDI Peak-to-Peak Jitter</td><td>14.85ps</td><td>0ps</td><td>50ps</td><td class="ok">Passes</td></tr>
<tr><td>Clock Frequency</td><td>0.000000MHz</td><td>124.9875MHz</td><td>125.0125MHz</td><td class="na">-----</td></tr>
<tr><td>Distortion</td><td>10.41mv</td><td>0mv</td><td>15mv</td><td class="ok">Passes</td></tr>
<tr><td>Return Loss</td><td>0.00dB</td><td>NA</td><td>NA</td><td class="na">-----</td></tr>
<tr><td>Mode Conversion Loss</td><td>0.00dB</td><td>NA</td><td>NA</td><td class="na">-----</td></tr>
<tr><td>Power Spectral Density</td><td>0.00dBm/Hz</td><td>NA</td><td>NA</td><td class="na">-----</td></tr>
<tr><td>Peak Output Voltage</td><td>0.00V</td><td>0V</td><td>1.3V</td><td class="na">-----</td></tr>
<tr><td>Positive Droop</td><td>0.00%</td><td>NA</td><td>10%</td><td class="na">-----</td></tr>
<tr><td>Negative Droop</td><td>0.00%</td><td>NA</td><td>10%</td><td class="na">-----</td></tr>
</tbody></table>
<div class="abs " style="left:964px;top:553.6px;width:958px;height:439.4px;background:#414141"></div>
<div class="t " style="left:974px;top:571.69px;font-size:28.6px;color:#dcdcdc;letter-spacing:0.62px">Positive Droop</div>
<div class="t " style="right:871.7px;top:620.62px;font-size:13.8px;color:#e6e6e6;letter-spacing:0.42px">400.00mV</div>
<div class="t " style="right:871.7px;top:678.47px;font-size:13.8px;color:#e6e6e6;letter-spacing:0.42px">300.00mV</div>
<div class="t " style="right:871.7px;top:736.32px;font-size:13.8px;color:#e6e6e6;letter-spacing:0.42px">200.00mV</div>
<div class="t " style="right:871.7px;top:794.17px;font-size:13.8px;color:#e6e6e6;letter-spacing:0.42px">100.00mV</div>
<div class="t " style="right:871.7px;top:852.02px;font-size:13.8px;color:#e6e6e6;letter-spacing:0.42px">0.00mV</div>
<div class="t " style="right:871.7px;top:909.87px;font-size:13.8px;color:#e6e6e6;letter-spacing:0.42px">-100.00mV</div>
<div class="t " style="right:871.7px;top:967.72px;font-size:13.8px;color:#e6e6e6;letter-spacing:0.42px">-200.00mV</div>
<svg class="abs" style="left:1870.5px;top:954.5px" width="38" height="26" viewBox="0 0 38 26"><path d="M0 2H23M0 12.7H23M0 23.5H23" stroke="#fff" stroke-width="2.6" fill="none"/><path d="M35.5 3.5L26.5 13L35.5 22.5" stroke="#fff" stroke-width="2.6" fill="none"/></svg>
<div class="abs " style="left:964px;top:992.8px;width:958px;height:2.6px;background:#a9abad"></div>
<div class="abs " style="left:1921px;top:101.4px;width:1px;height:452.6px;background:#6a6a6a"></div>
<!-- ===== bottom bar ===== -->
<div class="abs " style="left:0px;top:995.4px;width:1922px;height:5px;background:#5b6b6f"></div>
<div class="abs " style="left:0px;top:1000.4px;width:75.2px;height:77.6px;background:#000;border-radius:9px"></div>
<div class="abs " style="left:78.6px;top:1000.4px;width:655px;height:77.6px;background:#000;border-radius:9px"></div>
<div class="abs " style="left:737px;top:1000.4px;width:517.4px;height:77.6px;background:#000;border-radius:9px"></div>
<div class="abs " style="left:1258.4px;top:1000.4px;width:503.4px;height:77.6px;background:#000;border-radius:9px"></div>
<div class="abs " style="left:1765.4px;top:1000.4px;width:156.6px;height:77.6px;background:#000;border-radius:9px 0 0 9px"></div>
<div class="abs " style="left:1.5px;top:1002px;width:72.5px;height:76px;background:radial-gradient(ellipse 75% 70% at 50% 38%,#1a6fb4,#115a98 45%,#07305a 80%,#031a33);border-radius:9px 9px 6px 6px;border:1px solid #0a2a4c"></div>
<svg class="abs" style="left:16.3px;top:1019.6px" width="42" height="40" viewBox="0 0 42 40"><defs><linearGradient id="hq" x1="0" y1="0" x2="0" y2="1"><stop offset="0" stop-color="#6fb6dc"/><stop offset="0.5" stop-color="#3a86b6"/><stop offset="1" stop-color="#1a5a8c"/></linearGradient></defs><rect x="1" y="1" width="17.5" height="16.5" rx="2.5" fill="url(#hq)" stroke="#a9d6ee" stroke-width="1.2"/><rect x="23" y="1" width="17.5" height="16.5" rx="2.5" fill="url(#hq)" stroke="#a9d6ee" stroke-width="1.2"/><rect x="1" y="22" width="17.5" height="16.5" rx="2.5" fill="url(#hq)" stroke="#a9d6ee" stroke-width="1.2"/><rect x="23" y="22" width="17.5" height="16.5" rx="2.5" fill="url(#hq)" stroke="#a9d6ee" stroke-width="1.2"/></svg>
<div class="abs " style="left:86.5px;top:1011px;width:153.5px;height:63.6px;background:#4b5c66;border-radius:6px 6px 7px 7px;border:1px solid #586871"></div>
<div class="abs " style="left:87.5px;top:1020.2px;width:151.5px;height:53.4px;background:#263842;border-radius:0 0 6px 6px"></div>
<div class="abs " style="left:86.5px;top:1003.4px;width:71px;height:16.8px;background:#000;border:1.4px solid #5a6870;border-bottom:none;border-radius:6px 6px 0 0"></div>
<div class="t " style="left:100.5px;top:1005.93px;font-size:15.2px;color:#f1e83a;letter-spacing:-0.2px;-webkit-text-stroke:0.2px #f1e83a">CH1</div>
<div class="t " style="left:97px;top:1027.17px;font-size:17.4px;color:#f1e83a;letter-spacing:0.42px">99.00mV/</div>
<div class="t " style="left:97px;top:1050.63px;font-size:15.8px;color:#fff;letter-spacing:-0.15px">0.00V</div>
<svg class="abs" style="left:195.5px;top:1031.4px" width="18" height="8" viewBox="0 0 18 8"><path d="M0 1.5H17" stroke="#fff" stroke-width="1.7"/><path d="M0 5.6H17" stroke="#fff" stroke-width="1.5" stroke-dasharray="3.4 1.3"/></svg>
<div class="t " style="left:219px;top:1027.44px;font-size:17.2px;color:#fff;">Ω</div>
<div class="abs " style="left:248px;top:1011px;width:154px;height:63.6px;background:#4b5c66;border-radius:6px 6px 7px 7px;border:1px solid #586871"></div>
<div class="abs " style="left:249px;top:1020.2px;width:152px;height:53.4px;background:#263842;border-radius:0 0 6px 6px"></div>
<div class="abs " style="left:248px;top:1003.4px;width:71.5px;height:16.8px;background:#000;border:1.4px solid #5a6870;border-bottom:none;border-radius:6px 6px 0 0"></div>
<div class="t " style="left:262px;top:1005.93px;font-size:15.2px;color:#8796a0;letter-spacing:-0.2px;-webkit-text-stroke:0.2px #8796a0">CH2</div>
<div class="t " style="left:258.5px;top:1027.17px;font-size:17.4px;color:#8796a0;letter-spacing:0.42px">100.00mV/</div>
<div class="t " style="left:258.5px;top:1050.63px;font-size:15.8px;color:#8796a0;letter-spacing:-0.15px">0.00V</div>
<svg class="abs" style="left:357px;top:1031.4px" width="18" height="8" viewBox="0 0 18 8"><path d="M0 1.5H17" stroke="#8796a0" stroke-width="1.7"/><path d="M0 5.6H17" stroke="#8796a0" stroke-width="1.5" stroke-dasharray="3.4 1.3"/></svg>
<div class="abs " style="left:409.5px;top:1011px;width:154.5px;height:65px;background:#f51df5;border-radius:6px 6px 7px 7px;border:2px solid #f51df5"></div>
<div class="abs " style="left:411.5px;top:1021.2px;width:150.5px;height:52.8px;background:#45565d;border-radius:0 0 6px 6px"></div>
<div class="abs " style="left:409.5px;top:1003.4px;width:73px;height:16.8px;background:#000;border:2px solid #f51df5;border-bottom:none;border-radius:6px 6px 0 0"></div>
<div class="t " style="left:423.5px;top:1005.93px;font-size:15.2px;color:#f236f2;letter-spacing:-0.2px;-webkit-text-stroke:0.2px #f236f2">CH3</div>
<div class="t " style="left:420px;top:1027.17px;font-size:17.4px;color:#f236f2;letter-spacing:0.42px;text-shadow:0 0 2px #f236f2">99.00mV/</div>
<div class="t " style="left:420px;top:1050.63px;font-size:15.8px;color:#fff;letter-spacing:-0.15px">0.00V</div>
<svg class="abs" style="left:518.5px;top:1031.4px" width="18" height="8" viewBox="0 0 18 8"><path d="M0 1.5H17" stroke="#fff" stroke-width="1.7"/><path d="M0 5.6H17" stroke="#fff" stroke-width="1.5" stroke-dasharray="3.4 1.3"/></svg>
<div class="t " style="left:542px;top:1027.44px;font-size:17.2px;color:#fff;">Ω</div>
<div class="abs " style="left:572px;top:1011px;width:154.5px;height:63.6px;background:#4b5c66;border-radius:6px 6px 7px 7px;border:1px solid #586871"></div>
<div class="abs " style="left:573px;top:1020.2px;width:152.5px;height:53.4px;background:#263842;border-radius:0 0 6px 6px"></div>
<div class="abs " style="left:572px;top:1003.4px;width:72.5px;height:16.8px;background:#000;border:1.4px solid #5a6870;border-bottom:none;border-radius:6px 6px 0 0"></div>
<div class="t " style="left:586px;top:1005.93px;font-size:15.2px;color:#8796a0;letter-spacing:-0.2px;-webkit-text-stroke:0.2px #8796a0">CH4</div>
<div class="t " style="left:582.5px;top:1027.17px;font-size:17.4px;color:#8796a0;letter-spacing:0.42px">100.00mV/</div>
<div class="t " style="left:582.5px;top:1050.63px;font-size:15.8px;color:#8796a0;letter-spacing:-0.15px">0.00V</div>
<svg class="abs" style="left:681px;top:1031.4px" width="18" height="8" viewBox="0 0 18 8"><path d="M0 1.5H17" stroke="#8796a0" stroke-width="1.7"/><path d="M0 5.6H17" stroke="#8796a0" stroke-width="1.5" stroke-dasharray="3.4 1.3"/></svg>
<div class="abs " style="left:744px;top:1011px;width:119.6px;height:63.6px;background:#4b5c66;border-radius:6px 6px 7px 7px;border:1px solid #586871"></div>
<div class="abs " style="left:745px;top:1020.2px;width:117.6px;height:53.4px;background:#263842;border-radius:0 0 6px 6px"></div>
<div class="abs " style="left:792.6px;top:1003.4px;width:71px;height:16.8px;background:#000;border:1.4px solid #5a6870;border-bottom:none;border-radius:6px 6px 0 0"></div>
<div class="t " style="right:1063.4px;top:1006.22px;font-size:15.1px;color:#d2d2d2;">Math1</div>
<div class="t " style="left:752px;top:1027.17px;font-size:17.4px;color:#a4b8c3;letter-spacing:0.42px">500.00mV/</div>
<div class="t " style="left:752px;top:1050.63px;font-size:15.8px;color:#a4b8c3;letter-spacing:-0.55px">CH1+CH1</div>
<div class="abs " style="left:872px;top:1011px;width:119.6px;height:63.6px;background:#4b5c66;border-radius:6px 6px 7px 7px;border:1px solid #586871"></div>
<div class="abs " style="left:873px;top:1020.2px;width:117.6px;height:53.4px;background:#263842;border-radius:0 0 6px 6px"></div>
<div class="abs " style="left:920.6px;top:1003.4px;width:71px;height:16.8px;background:#000;border:1.4px solid #5a6870;border-bottom:none;border-radius:6px 6px 0 0"></div>
<div class="t " style="right:935.4px;top:1006.22px;font-size:15.1px;color:#d2d2d2;">Math2</div>
<div class="t " style="left:880px;top:1027.17px;font-size:17.4px;color:#a4b8c3;letter-spacing:0.42px">500.00mV/</div>
<div class="t " style="left:880px;top:1050.63px;font-size:15.8px;color:#a4b8c3;letter-spacing:-0.55px">CH1+CH1</div>
<div class="abs " style="left:1000px;top:1011px;width:119.6px;height:63.6px;background:#4b5c66;border-radius:6px 6px 7px 7px;border:1px solid #586871"></div>
<div class="abs " style="left:1001px;top:1020.2px;width:117.6px;height:53.4px;background:#263842;border-radius:0 0 6px 6px"></div>
<div class="abs " style="left:1048.6px;top:1003.4px;width:71px;height:16.8px;background:#000;border:1.4px solid #5a6870;border-bottom:none;border-radius:6px 6px 0 0"></div>
<div class="t " style="right:807.4px;top:1006.22px;font-size:15.1px;color:#d2d2d2;">Math3</div>
<div class="t " style="left:1008px;top:1027.17px;font-size:17.4px;color:#a4b8c3;letter-spacing:0.42px">500.00mV/</div>
<div class="t " style="left:1008px;top:1050.63px;font-size:15.8px;color:#a4b8c3;letter-spacing:-0.55px">CH1+CH1</div>
<div class="abs " style="left:1128px;top:1011px;width:119.6px;height:63.6px;background:#4b5c66;border-radius:6px 6px 7px 7px;border:1px solid #586871"></div>
<div class="abs " style="left:1129px;top:1020.2px;width:117.6px;height:53.4px;background:#263842;border-radius:0 0 6px 6px"></div>
<div class="abs " style="left:1176.6px;top:1003.4px;width:71px;height:16.8px;background:#000;border:1.4px solid #5a6870;border-bottom:none;border-radius:6px 6px 0 0"></div>
<div class="t " style="right:679.4px;top:1006.22px;font-size:15.1px;color:#d2d2d2;">Math4</div>
<div class="t " style="left:1136px;top:1027.17px;font-size:17.4px;color:#a4b8c3;letter-spacing:0.42px">500.00mV/</div>
<div class="t " style="left:1136px;top:1050.63px;font-size:15.8px;color:#a4b8c3;letter-spacing:-0.55px">CH1+CH1</div>
<div class="abs " style="left:1265.6px;top:1011px;width:119.8px;height:63.6px;background:#4b5c66;border-radius:6px 6px 7px 7px;border:1px solid #586871"></div>
<div class="abs " style="left:1266.6px;top:1020.2px;width:117.8px;height:53.4px;background:#263842;border-radius:0 0 6px 6px"></div>
<div class="abs " style="left:1313px;top:1003.4px;width:72.4px;height:16.8px;background:#000;border:1.4px solid #5a6870;border-bottom:none;border-radius:6px 6px 0 0"></div>
<div class="t " style="right:541.6px;top:1006.22px;font-size:15.1px;color:#d2d2d2;">RTSA</div>
<div class="t " style="left:1273.6px;top:1027.17px;font-size:17.4px;color:#a4b8c3;letter-spacing:-0.25px">C: 2.5GHz</div>
<div class="t " style="left:1273.6px;top:1050.63px;font-size:15.8px;color:#a4b8c3;letter-spacing:-0.55px">S: 5GHz</div>
<div class="t " style="left:1807.3px;top:1009.06px;font-size:16px;color:#fff;font-weight:bold;font-style:italic;letter-spacing:-1px;transform:scaleX(0.9);transform-origin:0 0">LXI</div>
<svg class="abs" style="left:1836px;top:1007.3px" width="22" height="16" viewBox="0 0 22 16"><path d="M1 5.3H4.2L9.2 1V15L4.2 10.7H1Z" fill="none" stroke="#e8e8e8" stroke-width="1.2" stroke-linejoin="round"/><path d="M6.6 3.4V12.6" stroke="#e8e8e8" stroke-width="0.9"/><path d="M13 4.5L19.5 11.5M19.5 4.5L13 11.5" stroke="#d8d8d8" stroke-width="1.1"/></svg>
<div class="t " style="left:1862.6px;top:1007.79px;font-size:17.5px;color:#fff;transform:scaleX(0.72);transform-origin:0 0">Rmt</div>
<div class="t " style="left:1844px;transform:translateX(-50%);top:1035.83px;font-size:15.8px;color:#fff;letter-spacing:0.1px">10:40:33</div>
<div class="t " style="left:1844px;transform:translateX(-50%);top:1058.83px;font-size:15.8px;color:#fff;letter-spacing:0.65px">2023/11/24</div>
</div>
</body></html>
